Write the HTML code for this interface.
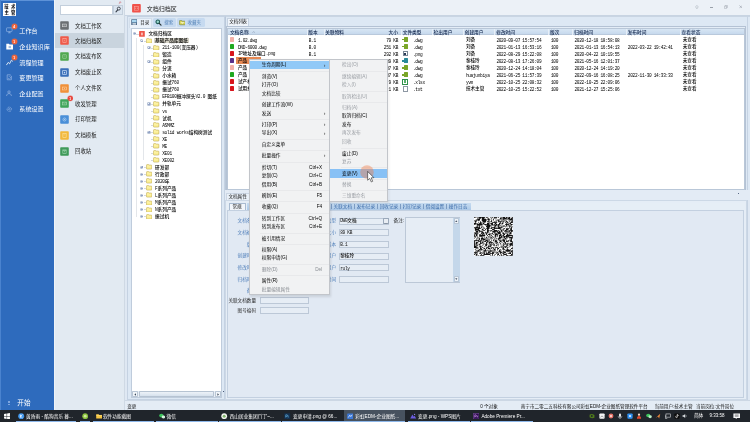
<!DOCTYPE html><html lang="zh-CN"><head><meta charset="utf-8"><title>彩虹EDM-企业图纸管理软件平台</title><style>
html,body{margin:0;padding:0;}
body{width:750px;height:422px;overflow:hidden;background:#dfe8f3;position:relative;font-family:"Liberation Sans","Noto Sans CJK SC",sans-serif;}
div,span.t,span.s,span.b,svg{position:absolute;box-sizing:border-box;}
span.t,span.s,span.b{white-space:nowrap;}
span.s{font-family:"Liberation Sans","Noto Sans CJK SC",sans-serif;font-weight:500;}
span.b{font-family:"Liberation Serif","Noto Serif CJK SC",serif;}
</style></head><body><div id="app" style="left:0;top:0;width:750px;height:422px;will-change:transform;">
<div style="left:0.00px;top:0.00px;width:53.60px;height:410.50px;background:#2e6bbd;"></div>
<div style="left:0.00px;top:0.00px;width:53.60px;height:0.90px;background:#5d92d8;"></div>
<div style="left:0.00px;top:0.00px;width:1.10px;height:410.50px;background:#4a83cf;"></div>
<div style="left:3.20px;top:3.20px;width:12.90px;height:12.70px;background:#fff;"></div>
<span class="t" style="top:4px;font-size:4.3px;line-height:6.02px;color:#16161c;left:4.35px;font-weight:900;">技</span>
<span class="t" style="top:4px;font-size:4.3px;line-height:6.02px;color:#16161c;left:11.05px;font-weight:900;">术</span>
<span class="t" style="top:10px;font-size:4.3px;line-height:6.02px;color:#16161c;left:4.55px;font-weight:900;">主</span>
<span class="t" style="top:10px;font-size:4.3px;line-height:6.02px;color:#16161c;left:11.05px;font-weight:900;">管</span>
<span class="t" style="top:27px;font-size:6.1px;line-height:8.54px;color:#fff;left:19.30px;">工作台</span>
<span class="t" style="top:43px;font-size:6.1px;line-height:8.54px;color:#fff;left:19.30px;">企业知识库</span>
<span class="t" style="top:59px;font-size:6.1px;line-height:8.54px;color:#fff;left:19.30px;">流程管理</span>
<span class="t" style="top:74px;font-size:6.1px;line-height:8.54px;color:#fff;left:19.30px;">变更管理</span>
<span class="t" style="top:90px;font-size:6.1px;line-height:8.54px;color:#fff;left:19.30px;">企业配置</span>
<span class="t" style="top:105px;font-size:6.1px;line-height:8.54px;color:#fff;left:19.30px;">系统设置</span>
<span class="t" style="top:398px;font-size:6.6px;line-height:9.24px;color:#fff;left:17.30px;">开始</span>
<div style="left:7.60px;top:400.60px;width:2.90px;height:0.50px;background:#7ea6df;"></div>
<div style="left:7.60px;top:402.10px;width:2.90px;height:0.50px;background:#7ea6df;"></div>
<div style="left:7.60px;top:403.60px;width:2.90px;height:0.50px;background:#7ea6df;"></div>
<svg style="left:5.8px;top:27.2px;width:6.8px;height:6.8px" viewBox="0 0 68 68"><rect x="5" y="8" width="56" height="38" rx="6" fill="none" stroke="#9dbde9" stroke-width="6"/><path d="M20 58h28M34 46v12" stroke="#9dbde9" stroke-width="6" fill="none"/></svg>
<svg style="left:5.9px;top:43.4px;width:7.6px;height:6.8px" viewBox="0 0 76 68"><path d="M3 8h26l6 8h38v48H3z" fill="#fff"/><path d="M26 34h24M26 46h24" stroke="#2e6bbd" stroke-width="5"/></svg>
<svg style="left:5.8px;top:59.2px;width:7.2px;height:6.8px" viewBox="0 0 72 68"><path d="M6 58L22 34l14 14L54 12l12 10" fill="none" stroke="#fff" stroke-width="8" stroke-linejoin="round" stroke-linecap="round"/></svg>
<svg style="left:5.8px;top:74.4px;width:6.6px;height:6.6px" viewBox="0 0 66 66"><path d="M12 8h30l12 12v38H12z" fill="none" stroke="#a3c0ea" stroke-width="6"/><path d="M22 40a12 12 0 1 0 4-12" fill="none" stroke="#a3c0ea" stroke-width="5"/></svg>
<svg style="left:5.6px;top:90.0px;width:6.8px;height:6.6px" viewBox="0 0 68 66"><circle cx="30" cy="20" r="12" fill="none" stroke="#a3c0ea" stroke-width="6"/><path d="M6 60c0-18 12-24 24-24s24 6 24 24" fill="none" stroke="#a3c0ea" stroke-width="6"/></svg>
<svg style="left:5.8px;top:105.6px;width:6.6px;height:6.6px" viewBox="0 0 66 66"><circle cx="33" cy="33" r="22" fill="none" stroke="#a3c0ea" stroke-width="7" stroke-dasharray="9 5"/><circle cx="33" cy="33" r="8" fill="none" stroke="#a3c0ea" stroke-width="5"/></svg>
<svg style="left:10.6px;top:22.7px;width:7.0px;height:7.0px" viewBox="0 0 70 70"><circle cx="35" cy="35" r="33" fill="#e8703f" opacity="0.35"/><circle cx="35" cy="35" r="27" fill="#f0633a"/></svg>
<span class="t" style="top:25px;font-size:3.3px;line-height:4.62px;color:#fff;left:13.25px;font-weight:bold;">4</span>
<svg style="left:10.6px;top:37.7px;width:7.0px;height:7.0px" viewBox="0 0 70 70"><circle cx="35" cy="35" r="33" fill="#e8703f" opacity="0.35"/><circle cx="35" cy="35" r="27" fill="#f0633a"/></svg>
<span class="t" style="top:40px;font-size:3.3px;line-height:4.62px;color:#fff;left:13.25px;font-weight:bold;">1</span>
<svg style="left:10.6px;top:53.9px;width:7.0px;height:7.0px" viewBox="0 0 70 70"><circle cx="35" cy="35" r="33" fill="#e8703f" opacity="0.35"/><circle cx="35" cy="35" r="27" fill="#f0633a"/></svg>
<span class="t" style="top:56px;font-size:3.3px;line-height:4.62px;color:#fff;left:13.25px;font-weight:bold;">1</span>
<div style="left:53.60px;top:0.00px;width:71.40px;height:410.50px;background:#e2eaf2;"></div>
<div style="left:124.40px;top:0.00px;width:0.80px;height:410.50px;background:#cfd9e4;"></div>
<div style="left:53.60px;top:0.00px;width:1.30px;height:410.50px;background:#eef3f8;"></div>
<div style="left:59.60px;top:5.30px;width:53.60px;height:9.60px;background:#fff;border:0.5px solid #c3cfdc;"></div>
<div style="left:113.20px;top:5.30px;width:9.40px;height:9.60px;background:#dbe5f0;border:0.5px solid #c3cfdc;"></div>
<svg style="left:114.6px;top:6.4px;width:6.6px;height:7.0px" viewBox="0 0 66 70"><circle cx="38" cy="26" r="15" fill="#e8eef6" stroke="#333a44" stroke-width="9"/><path d="M27 38L10 58" stroke="#333a44" stroke-width="11" stroke-linecap="round"/></svg>
<svg style="left:118.0px;top:1.0px;width:3.6px;height:3.6px" viewBox="0 0 36 36"><path d="M22 4l10 10-8 3-6 8-8-8 8-6zM12 24L4 32" stroke="#c98a94" stroke-width="4" fill="#e3a6ae"/></svg>
<div style="left:54.90px;top:32.90px;width:69.50px;height:15.40px;background:#c9d4de;"></div>
<svg style="left:60.2px;top:21.1px;width:9.0px;height:9.0px" viewBox="0 0 88 88"><rect x="2" y="2" width="84" height="84" rx="8" fill="#6b6f73"/><rect x="26" y="30" width="36" height="26" fill="none" stroke="#d8dadc" stroke-width="6"/><path d="M34 40h20" stroke="#d8dadc" stroke-width="5"/></svg>
<span class="t" style="top:23px;font-size:5.4px;line-height:7.56px;color:#222;left:75.00px;">文档工作区</span>
<svg style="left:60.2px;top:36.2px;width:9.0px;height:9.0px" viewBox="0 0 88 88"><rect x="2" y="2" width="84" height="84" rx="8" fill="#ef5a4a"/><rect x="28" y="26" width="32" height="36" fill="none" stroke="#fbb5aa" stroke-width="6"/><path d="M44 36v16" stroke="#fbb5aa" stroke-width="5"/></svg>
<span class="t" style="top:38px;font-size:5.4px;line-height:7.56px;color:#222;left:75.00px;">文档归档区</span>
<svg style="left:60.2px;top:52.0px;width:9.0px;height:9.0px" viewBox="0 0 88 88"><rect x="2" y="2" width="84" height="84" rx="8" fill="#4fa84f"/><rect x="26" y="26" width="36" height="36" rx="4" fill="none" stroke="#a8d6a8" stroke-width="6"/><path d="M36 40h16" stroke="#a8d6a8" stroke-width="5"/></svg>
<span class="t" style="top:53px;font-size:5.4px;line-height:7.56px;color:#222;left:75.00px;">文档发布区</span>
<svg style="left:60.2px;top:67.9px;width:9.0px;height:9.0px" viewBox="0 0 88 88"><rect x="2" y="2" width="84" height="84" rx="8" fill="#3a6fb8"/><rect x="26" y="26" width="36" height="36" fill="none" stroke="#c9dcf6" stroke-width="7"/><rect x="38" y="38" width="12" height="14" fill="#c9dcf6"/></svg>
<span class="t" style="top:69px;font-size:5.4px;line-height:7.56px;color:#222;left:75.00px;">文档废止区</span>
<svg style="left:60.2px;top:83.5px;width:9.0px;height:9.0px" viewBox="0 0 88 88"><rect x="2" y="2" width="84" height="84" rx="8" fill="#f0903a"/><rect x="26" y="30" width="36" height="28" fill="none" stroke="#fbd0a5" stroke-width="6"/><circle cx="44" cy="44" r="5" fill="#fbd0a5"/></svg>
<span class="t" style="top:85px;font-size:5.4px;line-height:7.56px;color:#222;left:75.00px;">个人文件区</span>
<svg style="left:60.2px;top:99.2px;width:9.0px;height:9.0px" viewBox="0 0 88 88"><rect x="2" y="2" width="84" height="84" rx="8" fill="#3fa45a"/><rect x="24" y="30" width="40" height="28" fill="none" stroke="#a9d9b5" stroke-width="6"/><path d="M26 32l18 14 18-14" fill="none" stroke="#a9d9b5" stroke-width="5"/></svg>
<span class="t" style="top:101px;font-size:5.4px;line-height:7.56px;color:#222;left:75.00px;">收发管理</span>
<svg style="left:60.2px;top:114.9px;width:9.0px;height:9.0px" viewBox="0 0 88 88"><rect x="2" y="2" width="84" height="84" rx="8" fill="#4a8fd8"/><circle cx="44" cy="44" r="15" fill="none" stroke="#c3dcf6" stroke-width="6"/><circle cx="44" cy="44" r="5" fill="#c3dcf6"/></svg>
<span class="t" style="top:116px;font-size:5.4px;line-height:7.56px;color:#222;left:75.00px;">打印管理</span>
<svg style="left:60.2px;top:130.5px;width:9.0px;height:9.0px" viewBox="0 0 88 88"><rect x="2" y="2" width="84" height="84" rx="8" fill="#f2b83a"/><rect x="28" y="26" width="32" height="38" fill="none" stroke="#fbe3a5" stroke-width="6"/><path d="M36 38h12" stroke="#fbe3a5" stroke-width="5"/></svg>
<span class="t" style="top:132px;font-size:5.4px;line-height:7.56px;color:#222;left:75.00px;">文档模板</span>
<svg style="left:60.2px;top:146.5px;width:9.0px;height:9.0px" viewBox="0 0 88 88"><rect x="2" y="2" width="84" height="84" rx="8" fill="#3f9a5a"/><rect x="28" y="32" width="32" height="30" fill="none" stroke="#a9d9b8" stroke-width="6"/><path d="M24 28h40" stroke="#a9d9b8" stroke-width="6"/><circle cx="44" cy="47" r="5" fill="#a9d9b8"/></svg>
<span class="t" style="top:148px;font-size:5.4px;line-height:7.56px;color:#222;left:75.00px;">回收站</span>
<svg style="left:66.9px;top:95.1px;width:6.6px;height:6.6px" viewBox="0 0 66 66"><circle cx="33" cy="33" r="31" fill="#e8463c" opacity="0.3"/><circle cx="33" cy="33" r="26" fill="#e8463c"/></svg>
<span class="t" style="top:97px;font-size:3.3px;line-height:4.62px;color:#fff;left:69.35px;font-weight:bold;">1</span>
<div style="left:125.00px;top:0.00px;width:625.00px;height:15.40px;background:#ecf1f7;"></div>
<div style="left:125.00px;top:15.20px;width:625.00px;height:0.60px;background:#c8d4e2;"></div>
<svg style="left:132px;top:4.2px;width:8.9px;height:8.6px" viewBox="0 0 89 86"><rect x="1" y="1" width="87" height="84" rx="8" fill="#f0524a"/><rect x="24" y="24" width="40" height="38" fill="none" stroke="#f9a79f" stroke-width="6"/><path d="M34 38v8M54 38v8" stroke="#fcd0cb" stroke-width="7"/></svg>
<span class="t" style="top:5px;font-size:6.05px;line-height:8.47px;color:#222;left:146.70px;">文档归档区</span>
<div style="left:127.00px;top:16.20px;width:97.60px;height:384.00px;background:#dde8f4;border:0.5px solid #c5d2e2;"></div>
<div style="left:129.20px;top:17.80px;width:22.60px;height:10.20px;background:#ebf2fa;border:0.5px solid #d3deeb;border-bottom:none;"></div>
<div style="left:152.80px;top:18.10px;width:23.20px;height:8.60px;background:#c6daf0;border-radius:1.5px;"></div>
<div style="left:176.50px;top:18.10px;width:28.30px;height:8.60px;background:#c6daf0;border-radius:1.5px;"></div>
<span class="t" style="top:20px;font-size:4.5px;line-height:6.30px;color:#111;left:140.20px;">目录</span>
<span class="t" style="top:20px;font-size:4.5px;line-height:6.30px;color:#4f7fb5;left:164.20px;">搜索</span>
<span class="t" style="top:20px;font-size:4.5px;line-height:6.30px;color:#4f7fb5;left:187.40px;">收藏夹</span>
<svg style="left:130.6px;top:19.4px;width:6.6px;height:6.4px" viewBox="0 0 66 64"><rect x="3" y="3" width="60" height="58" rx="4" fill="#3d5d80"/><rect x="10" y="8" width="46" height="26" fill="#a9d6f0"/><rect x="14" y="42" width="38" height="14" fill="#e6ecf2"/></svg>
<svg style="left:155.0px;top:19.2px;width:7.0px;height:7.0px" viewBox="0 0 70 70"><circle cx="28" cy="28" r="18" fill="#9ad8cf" stroke="#1d5b55" stroke-width="11"/><path d="M42 44L60 62" stroke="#23302f" stroke-width="12" stroke-linecap="round"/></svg>
<svg style="left:178.6px;top:20.4px;width:6.8px;height:5.2px" viewBox="0 0 68 52"><path d="M4 12q0-8 8-8h14l6 8h24q8 0 8 8v20q0 8-8 8H12q-8 0-8-8z" fill="#d6d24e" stroke="#6f7a3a" stroke-width="6"/><path d="M12 22h44l-22 16z" fill="#f9f7d8"/></svg>
<div style="left:131.00px;top:28.00px;width:90.60px;height:369.60px;background:#fff;border:0.5px solid #bfccdc;"></div>
<div style="left:131.50px;top:390.80px;width:89.60px;height:6.40px;background:#e9eff6;"></div>
<div style="left:131.60px;top:390.90px;width:6.80px;height:6.20px;background:#f1f5f9;border:0.5px solid #b9c6d5;border-radius:0.8px;"></div>
<div style="left:214.60px;top:390.90px;width:6.50px;height:6.20px;background:#f1f5f9;border:0.5px solid #b9c6d5;border-radius:0.8px;"></div>
<div style="left:138.60px;top:390.90px;width:75.80px;height:6.20px;background:linear-gradient(#edf2f8,#d6e1ed);border:0.5px solid #b6c3d2;border-radius:0.8px;"></div>
<svg style="left:133.8px;top:392.5px;width:2.4px;height:3.0px" viewBox="0 0 24 30"><path d="M20 2L4 15l16 13z" fill="#3d4a5c"/></svg>
<svg style="left:216.8px;top:392.5px;width:2.4px;height:3.0px" viewBox="0 0 24 30"><path d="M4 2l16 13L4 28z" fill="#3d4a5c"/></svg>
<div style="left:222.90px;top:391.00px;width:0.90px;height:1.20px;background:#4a5a78;"></div>
<div style="left:136.40px;top:33.55px;width:2.60px;height:0.35px;background:#d5d9df;"></div>
<div style="left:133.20px;top:32.10px;width:3.20px;height:3.20px;background:#eef2f8;border:0.5px solid #b9c5d8;border-radius:1px;"></div>
<div style="left:134.00px;top:33.48px;width:1.60px;height:0.45px;background:#94a3c6;"></div>
<svg style="left:139.2px;top:30.700000000000003px;width:5.9px;height:5.9px" viewBox="0 0 59 59"><rect x="1" y="1" width="57" height="57" rx="5" fill="#ee5548"/><rect x="20" y="16" width="19" height="27" fill="#f9b9b2"/></svg>
<span class="s" style="top:31px;font-size:4.7px;line-height:6.58px;color:#000;left:148.40px;">文档归档区</span>
<div style="left:143.50px;top:40.58px;width:2.60px;height:0.35px;background:#d5d9df;"></div>
<div style="left:140.30px;top:39.13px;width:3.20px;height:3.20px;background:#eef2f8;border:0.5px solid #b9c5d8;border-radius:1px;"></div>
<div style="left:141.10px;top:40.51px;width:1.60px;height:0.45px;background:#94a3c6;"></div>
<svg style="left:146.3px;top:37.830000000000005px;width:6.2px;height:5.6px" viewBox="0 0 62 56"><path d="M4 14q0-8 8-8h12q5 0 7 5h21q7 0 7 7v26q0 7-7 7H11q-7 0-7-7z" fill="#fbef94" stroke="#b39a3c" stroke-width="5"/><path d="M7 21h48" stroke="#fffbd6" stroke-width="4"/></svg>
<div style="left:154.40px;top:38.03px;width:34.40px;height:5.30px;background:#d6d3c7;"></div>
<span class="s" style="top:38px;font-size:4.7px;line-height:6.58px;color:#000;left:155.10px;">基础产品库图纸</span>
<div style="left:150.60px;top:47.61px;width:2.60px;height:0.35px;background:#d5d9df;"></div>
<div style="left:147.40px;top:46.16px;width:3.20px;height:3.20px;background:#eef2f8;border:0.5px solid #b9c5d8;border-radius:1px;"></div>
<div style="left:148.20px;top:47.54px;width:1.60px;height:0.45px;background:#94a3c6;"></div>
<div style="left:148.78px;top:46.96px;width:0.45px;height:1.60px;background:#94a3c6;"></div>
<svg style="left:153.4px;top:44.86000000000001px;width:6.2px;height:5.6px" viewBox="0 0 62 56"><path d="M4 14q0-8 8-8h12q5 0 7 5h21q7 0 7 7v26q0 7-7 7H11q-7 0-7-7z" fill="#fbef94" stroke="#b39a3c" stroke-width="5"/><path d="M7 21h48" stroke="#fffbd6" stroke-width="4"/></svg>
<span class="s" style="top:45px;font-size:4.7px;line-height:6.58px;color:#000;left:162.20px;"><span style="font-family:'Liberation Mono',monospace;font-size:4.50px;letter-spacing:-0.29px">211-100(</span>变压器<span style="font-family:'Liberation Mono',monospace;font-size:4.50px;letter-spacing:-0.29px">)</span></span>
<div style="left:150.60px;top:54.64px;width:2.60px;height:0.35px;background:#d5d9df;"></div>
<svg style="left:153.4px;top:51.89000000000001px;width:6.2px;height:5.6px" viewBox="0 0 62 56"><path d="M4 14q0-8 8-8h12q5 0 7 5h21q7 0 7 7v26q0 7-7 7H11q-7 0-7-7z" fill="#fbef94" stroke="#b39a3c" stroke-width="5"/><path d="M7 21h48" stroke="#fffbd6" stroke-width="4"/></svg>
<span class="s" style="top:52px;font-size:4.7px;line-height:6.58px;color:#000;left:162.20px;">锻造</span>
<div style="left:150.60px;top:61.67px;width:2.60px;height:0.35px;background:#d5d9df;"></div>
<div style="left:147.40px;top:60.22px;width:3.20px;height:3.20px;background:#eef2f8;border:0.5px solid #b9c5d8;border-radius:1px;"></div>
<div style="left:148.20px;top:61.60px;width:1.60px;height:0.45px;background:#94a3c6;"></div>
<div style="left:148.78px;top:61.02px;width:0.45px;height:1.60px;background:#94a3c6;"></div>
<svg style="left:153.4px;top:58.92000000000001px;width:6.2px;height:5.6px" viewBox="0 0 62 56"><path d="M4 14q0-8 8-8h12q5 0 7 5h21q7 0 7 7v26q0 7-7 7H11q-7 0-7-7z" fill="#fbef94" stroke="#b39a3c" stroke-width="5"/><path d="M7 21h48" stroke="#fffbd6" stroke-width="4"/></svg>
<span class="s" style="top:59px;font-size:4.7px;line-height:6.58px;color:#000;left:162.20px;">组件</span>
<div style="left:150.60px;top:68.70px;width:2.60px;height:0.35px;background:#d5d9df;"></div>
<svg style="left:153.4px;top:65.94999999999999px;width:6.2px;height:5.6px" viewBox="0 0 62 56"><path d="M4 14q0-8 8-8h12q5 0 7 5h21q7 0 7 7v26q0 7-7 7H11q-7 0-7-7z" fill="#fbef94" stroke="#b39a3c" stroke-width="5"/><path d="M7 21h48" stroke="#fffbd6" stroke-width="4"/></svg>
<span class="s" style="top:66px;font-size:4.7px;line-height:6.58px;color:#000;left:162.20px;">分流</span>
<div style="left:150.60px;top:75.73px;width:2.60px;height:0.35px;background:#d5d9df;"></div>
<svg style="left:153.4px;top:72.97999999999999px;width:6.2px;height:5.6px" viewBox="0 0 62 56"><path d="M4 14q0-8 8-8h12q5 0 7 5h21q7 0 7 7v26q0 7-7 7H11q-7 0-7-7z" fill="#fbef94" stroke="#b39a3c" stroke-width="5"/><path d="M7 21h48" stroke="#fffbd6" stroke-width="4"/></svg>
<span class="s" style="top:73px;font-size:4.7px;line-height:6.58px;color:#000;left:162.20px;">小水箱</span>
<div style="left:150.60px;top:82.76px;width:2.60px;height:0.35px;background:#d5d9df;"></div>
<svg style="left:153.4px;top:80.00999999999999px;width:6.2px;height:5.6px" viewBox="0 0 62 56"><path d="M4 14q0-8 8-8h12q5 0 7 5h21q7 0 7 7v26q0 7-7 7H11q-7 0-7-7z" fill="#fbef94" stroke="#b39a3c" stroke-width="5"/><path d="M7 21h48" stroke="#fffbd6" stroke-width="4"/></svg>
<span class="s" style="top:80px;font-size:4.7px;line-height:6.58px;color:#000;left:162.20px;">振试<span style="font-family:'Liberation Mono',monospace;font-size:4.50px;letter-spacing:-0.29px">760</span></span>
<div style="left:150.60px;top:89.79px;width:2.60px;height:0.35px;background:#d5d9df;"></div>
<svg style="left:153.4px;top:87.03999999999999px;width:6.2px;height:5.6px" viewBox="0 0 62 56"><path d="M4 14q0-8 8-8h12q5 0 7 5h21q7 0 7 7v26q0 7-7 7H11q-7 0-7-7z" fill="#fbef94" stroke="#b39a3c" stroke-width="5"/><path d="M7 21h48" stroke="#fffbd6" stroke-width="4"/></svg>
<span class="s" style="top:87px;font-size:4.7px;line-height:6.58px;color:#000;left:162.20px;">振试<span style="font-family:'Liberation Mono',monospace;font-size:4.50px;letter-spacing:-0.29px">760</span></span>
<div style="left:150.60px;top:96.82px;width:2.60px;height:0.35px;background:#d5d9df;"></div>
<svg style="left:153.4px;top:94.07px;width:6.2px;height:5.6px" viewBox="0 0 62 56"><path d="M4 14q0-8 8-8h12q5 0 7 5h21q7 0 7 7v26q0 7-7 7H11q-7 0-7-7z" fill="#fbef94" stroke="#b39a3c" stroke-width="5"/><path d="M7 21h48" stroke="#fffbd6" stroke-width="4"/></svg>
<span class="s" style="top:94px;font-size:4.7px;line-height:6.58px;color:#000;left:162.20px;"><span style="font-family:'Liberation Mono',monospace;font-size:4.50px;letter-spacing:-0.29px">EFB100</span>振冲探头<span style="font-family:'Liberation Mono',monospace;font-size:4.50px;letter-spacing:-0.29px">V2.0 </span>图纸</span>
<div style="left:150.60px;top:103.85px;width:2.60px;height:0.35px;background:#d5d9df;"></div>
<div style="left:147.40px;top:102.40px;width:3.20px;height:3.20px;background:#eef2f8;border:0.5px solid #b9c5d8;border-radius:1px;"></div>
<div style="left:148.20px;top:103.78px;width:1.60px;height:0.45px;background:#94a3c6;"></div>
<div style="left:148.78px;top:103.20px;width:0.45px;height:1.60px;background:#94a3c6;"></div>
<svg style="left:153.4px;top:101.1px;width:6.2px;height:5.6px" viewBox="0 0 62 56"><path d="M4 14q0-8 8-8h12q5 0 7 5h21q7 0 7 7v26q0 7-7 7H11q-7 0-7-7z" fill="#fbef94" stroke="#b39a3c" stroke-width="5"/><path d="M7 21h48" stroke="#fffbd6" stroke-width="4"/></svg>
<span class="s" style="top:101px;font-size:4.7px;line-height:6.58px;color:#000;left:162.20px;">并轨单元</span>
<div style="left:150.60px;top:110.88px;width:2.60px;height:0.35px;background:#d5d9df;"></div>
<svg style="left:153.4px;top:108.13px;width:6.2px;height:5.6px" viewBox="0 0 62 56"><path d="M4 14q0-8 8-8h12q5 0 7 5h21q7 0 7 7v26q0 7-7 7H11q-7 0-7-7z" fill="#fbef94" stroke="#b39a3c" stroke-width="5"/><path d="M7 21h48" stroke="#fffbd6" stroke-width="4"/></svg>
<span class="s" style="top:109px;font-size:4.7px;line-height:6.58px;color:#000;left:162.20px;"><span style="font-family:'Liberation Mono',monospace;font-size:4.50px;letter-spacing:-0.29px">vs</span></span>
<div style="left:150.60px;top:117.91px;width:2.60px;height:0.35px;background:#d5d9df;"></div>
<svg style="left:153.4px;top:115.16px;width:6.2px;height:5.6px" viewBox="0 0 62 56"><path d="M4 14q0-8 8-8h12q5 0 7 5h21q7 0 7 7v26q0 7-7 7H11q-7 0-7-7z" fill="#fbef94" stroke="#b39a3c" stroke-width="5"/><path d="M7 21h48" stroke="#fffbd6" stroke-width="4"/></svg>
<span class="s" style="top:116px;font-size:4.7px;line-height:6.58px;color:#000;left:162.20px;">试机</span>
<div style="left:150.60px;top:124.94px;width:2.60px;height:0.35px;background:#d5d9df;"></div>
<svg style="left:153.4px;top:122.19px;width:6.2px;height:5.6px" viewBox="0 0 62 56"><path d="M4 14q0-8 8-8h12q5 0 7 5h21q7 0 7 7v26q0 7-7 7H11q-7 0-7-7z" fill="#fbef94" stroke="#b39a3c" stroke-width="5"/><path d="M7 21h48" stroke="#fffbd6" stroke-width="4"/></svg>
<span class="s" style="top:123px;font-size:4.7px;line-height:6.58px;color:#000;left:162.20px;"><span style="font-family:'Liberation Mono',monospace;font-size:4.50px;letter-spacing:-0.29px">ASMMZ</span></span>
<div style="left:150.60px;top:131.97px;width:2.60px;height:0.35px;background:#d5d9df;"></div>
<div style="left:147.40px;top:130.52px;width:3.20px;height:3.20px;background:#eef2f8;border:0.5px solid #b9c5d8;border-radius:1px;"></div>
<div style="left:148.20px;top:131.90px;width:1.60px;height:0.45px;background:#94a3c6;"></div>
<div style="left:148.78px;top:131.32px;width:0.45px;height:1.60px;background:#94a3c6;"></div>
<svg style="left:153.4px;top:129.22px;width:6.2px;height:5.6px" viewBox="0 0 62 56"><path d="M4 14q0-8 8-8h12q5 0 7 5h21q7 0 7 7v26q0 7-7 7H11q-7 0-7-7z" fill="#fbef94" stroke="#b39a3c" stroke-width="5"/><path d="M7 21h48" stroke="#fffbd6" stroke-width="4"/></svg>
<span class="s" style="top:130px;font-size:4.7px;line-height:6.58px;color:#000;left:162.20px;"><span style="font-family:'Liberation Mono',monospace;font-size:4.50px;letter-spacing:-0.29px">solid works</span>结构树测试</span>
<div style="left:150.60px;top:139.00px;width:2.60px;height:0.35px;background:#d5d9df;"></div>
<svg style="left:153.4px;top:136.25px;width:6.2px;height:5.6px" viewBox="0 0 62 56"><path d="M4 14q0-8 8-8h12q5 0 7 5h21q7 0 7 7v26q0 7-7 7H11q-7 0-7-7z" fill="#fbef94" stroke="#b39a3c" stroke-width="5"/><path d="M7 21h48" stroke="#fffbd6" stroke-width="4"/></svg>
<span class="s" style="top:137px;font-size:4.7px;line-height:6.58px;color:#000;left:162.20px;"><span style="font-family:'Liberation Mono',monospace;font-size:4.50px;letter-spacing:-0.29px">XE</span></span>
<div style="left:150.60px;top:146.03px;width:2.60px;height:0.35px;background:#d5d9df;"></div>
<svg style="left:153.4px;top:143.28px;width:6.2px;height:5.6px" viewBox="0 0 62 56"><path d="M4 14q0-8 8-8h12q5 0 7 5h21q7 0 7 7v26q0 7-7 7H11q-7 0-7-7z" fill="#fbef94" stroke="#b39a3c" stroke-width="5"/><path d="M7 21h48" stroke="#fffbd6" stroke-width="4"/></svg>
<span class="s" style="top:144px;font-size:4.7px;line-height:6.58px;color:#000;left:162.20px;"><span style="font-family:'Liberation Mono',monospace;font-size:4.50px;letter-spacing:-0.29px">ME</span></span>
<div style="left:150.60px;top:153.06px;width:2.60px;height:0.35px;background:#d5d9df;"></div>
<svg style="left:153.4px;top:150.31px;width:6.2px;height:5.6px" viewBox="0 0 62 56"><path d="M4 14q0-8 8-8h12q5 0 7 5h21q7 0 7 7v26q0 7-7 7H11q-7 0-7-7z" fill="#fbef94" stroke="#b39a3c" stroke-width="5"/><path d="M7 21h48" stroke="#fffbd6" stroke-width="4"/></svg>
<span class="s" style="top:151px;font-size:4.7px;line-height:6.58px;color:#000;left:162.20px;"><span style="font-family:'Liberation Mono',monospace;font-size:4.50px;letter-spacing:-0.29px">XE01</span></span>
<div style="left:150.60px;top:160.09px;width:2.60px;height:0.35px;background:#d5d9df;"></div>
<svg style="left:153.4px;top:157.34px;width:6.2px;height:5.6px" viewBox="0 0 62 56"><path d="M4 14q0-8 8-8h12q5 0 7 5h21q7 0 7 7v26q0 7-7 7H11q-7 0-7-7z" fill="#fbef94" stroke="#b39a3c" stroke-width="5"/><path d="M7 21h48" stroke="#fffbd6" stroke-width="4"/></svg>
<span class="s" style="top:158px;font-size:4.7px;line-height:6.58px;color:#000;left:162.20px;"><span style="font-family:'Liberation Mono',monospace;font-size:4.50px;letter-spacing:-0.29px">XE002</span></span>
<div style="left:143.50px;top:167.12px;width:2.60px;height:0.35px;background:#d5d9df;"></div>
<div style="left:140.30px;top:165.67px;width:3.20px;height:3.20px;background:#eef2f8;border:0.5px solid #b9c5d8;border-radius:1px;"></div>
<div style="left:141.10px;top:167.05px;width:1.60px;height:0.45px;background:#94a3c6;"></div>
<div style="left:141.68px;top:166.47px;width:0.45px;height:1.60px;background:#94a3c6;"></div>
<svg style="left:146.3px;top:164.36999999999998px;width:6.2px;height:5.6px" viewBox="0 0 62 56"><path d="M4 14q0-8 8-8h12q5 0 7 5h21q7 0 7 7v26q0 7-7 7H11q-7 0-7-7z" fill="#fbef94" stroke="#b39a3c" stroke-width="5"/><path d="M7 21h48" stroke="#fffbd6" stroke-width="4"/></svg>
<span class="s" style="top:165px;font-size:4.7px;line-height:6.58px;color:#000;left:155.10px;">研发部</span>
<div style="left:143.50px;top:174.15px;width:2.60px;height:0.35px;background:#d5d9df;"></div>
<div style="left:140.30px;top:172.70px;width:3.20px;height:3.20px;background:#eef2f8;border:0.5px solid #b9c5d8;border-radius:1px;"></div>
<div style="left:141.10px;top:174.08px;width:1.60px;height:0.45px;background:#94a3c6;"></div>
<div style="left:141.68px;top:173.50px;width:0.45px;height:1.60px;background:#94a3c6;"></div>
<svg style="left:146.3px;top:171.4px;width:6.2px;height:5.6px" viewBox="0 0 62 56"><path d="M4 14q0-8 8-8h12q5 0 7 5h21q7 0 7 7v26q0 7-7 7H11q-7 0-7-7z" fill="#fbef94" stroke="#b39a3c" stroke-width="5"/><path d="M7 21h48" stroke="#fffbd6" stroke-width="4"/></svg>
<span class="s" style="top:172px;font-size:4.7px;line-height:6.58px;color:#000;left:155.10px;">行政部</span>
<div style="left:143.50px;top:181.18px;width:2.60px;height:0.35px;background:#d5d9df;"></div>
<div style="left:140.30px;top:179.73px;width:3.20px;height:3.20px;background:#eef2f8;border:0.5px solid #b9c5d8;border-radius:1px;"></div>
<div style="left:141.10px;top:181.11px;width:1.60px;height:0.45px;background:#94a3c6;"></div>
<div style="left:141.68px;top:180.53px;width:0.45px;height:1.60px;background:#94a3c6;"></div>
<svg style="left:146.3px;top:178.42999999999998px;width:6.2px;height:5.6px" viewBox="0 0 62 56"><path d="M4 14q0-8 8-8h12q5 0 7 5h21q7 0 7 7v26q0 7-7 7H11q-7 0-7-7z" fill="#fbef94" stroke="#b39a3c" stroke-width="5"/><path d="M7 21h48" stroke="#fffbd6" stroke-width="4"/></svg>
<span class="s" style="top:179px;font-size:4.7px;line-height:6.58px;color:#000;left:155.10px;"><span style="font-family:'Liberation Mono',monospace;font-size:4.50px;letter-spacing:-0.29px">2020</span>年</span>
<div style="left:143.50px;top:188.21px;width:2.60px;height:0.35px;background:#d5d9df;"></div>
<div style="left:140.30px;top:186.76px;width:3.20px;height:3.20px;background:#eef2f8;border:0.5px solid #b9c5d8;border-radius:1px;"></div>
<div style="left:141.10px;top:188.14px;width:1.60px;height:0.45px;background:#94a3c6;"></div>
<div style="left:141.68px;top:187.56px;width:0.45px;height:1.60px;background:#94a3c6;"></div>
<svg style="left:146.3px;top:185.46px;width:6.2px;height:5.6px" viewBox="0 0 62 56"><path d="M4 14q0-8 8-8h12q5 0 7 5h21q7 0 7 7v26q0 7-7 7H11q-7 0-7-7z" fill="#fbef94" stroke="#b39a3c" stroke-width="5"/><path d="M7 21h48" stroke="#fffbd6" stroke-width="4"/></svg>
<span class="s" style="top:186px;font-size:4.7px;line-height:6.58px;color:#000;left:155.10px;"><span style="font-family:'Liberation Mono',monospace;font-size:4.50px;letter-spacing:-0.29px">F</span>系列产品</span>
<div style="left:143.50px;top:195.24px;width:2.60px;height:0.35px;background:#d5d9df;"></div>
<div style="left:140.30px;top:193.79px;width:3.20px;height:3.20px;background:#eef2f8;border:0.5px solid #b9c5d8;border-radius:1px;"></div>
<div style="left:141.10px;top:195.17px;width:1.60px;height:0.45px;background:#94a3c6;"></div>
<div style="left:141.68px;top:194.59px;width:0.45px;height:1.60px;background:#94a3c6;"></div>
<svg style="left:146.3px;top:192.48999999999998px;width:6.2px;height:5.6px" viewBox="0 0 62 56"><path d="M4 14q0-8 8-8h12q5 0 7 5h21q7 0 7 7v26q0 7-7 7H11q-7 0-7-7z" fill="#fbef94" stroke="#b39a3c" stroke-width="5"/><path d="M7 21h48" stroke="#fffbd6" stroke-width="4"/></svg>
<span class="s" style="top:193px;font-size:4.7px;line-height:6.58px;color:#000;left:155.10px;"><span style="font-family:'Liberation Mono',monospace;font-size:4.50px;letter-spacing:-0.29px">L</span>系列产品</span>
<div style="left:143.50px;top:202.27px;width:2.60px;height:0.35px;background:#d5d9df;"></div>
<div style="left:140.30px;top:200.82px;width:3.20px;height:3.20px;background:#eef2f8;border:0.5px solid #b9c5d8;border-radius:1px;"></div>
<div style="left:141.10px;top:202.20px;width:1.60px;height:0.45px;background:#94a3c6;"></div>
<div style="left:141.68px;top:201.62px;width:0.45px;height:1.60px;background:#94a3c6;"></div>
<svg style="left:146.3px;top:199.52px;width:6.2px;height:5.6px" viewBox="0 0 62 56"><path d="M4 14q0-8 8-8h12q5 0 7 5h21q7 0 7 7v26q0 7-7 7H11q-7 0-7-7z" fill="#fbef94" stroke="#b39a3c" stroke-width="5"/><path d="M7 21h48" stroke="#fffbd6" stroke-width="4"/></svg>
<span class="s" style="top:200px;font-size:4.7px;line-height:6.58px;color:#000;left:155.10px;"><span style="font-family:'Liberation Mono',monospace;font-size:4.50px;letter-spacing:-0.29px">M</span>系列产品</span>
<div style="left:143.50px;top:209.30px;width:2.60px;height:0.35px;background:#d5d9df;"></div>
<div style="left:140.30px;top:207.85px;width:3.20px;height:3.20px;background:#eef2f8;border:0.5px solid #b9c5d8;border-radius:1px;"></div>
<div style="left:141.10px;top:209.23px;width:1.60px;height:0.45px;background:#94a3c6;"></div>
<div style="left:141.68px;top:208.65px;width:0.45px;height:1.60px;background:#94a3c6;"></div>
<svg style="left:146.3px;top:206.54999999999998px;width:6.2px;height:5.6px" viewBox="0 0 62 56"><path d="M4 14q0-8 8-8h12q5 0 7 5h21q7 0 7 7v26q0 7-7 7H11q-7 0-7-7z" fill="#fbef94" stroke="#b39a3c" stroke-width="5"/><path d="M7 21h48" stroke="#fffbd6" stroke-width="4"/></svg>
<span class="s" style="top:207px;font-size:4.7px;line-height:6.58px;color:#000;left:155.10px;"><span style="font-family:'Liberation Mono',monospace;font-size:4.50px;letter-spacing:-0.29px">N</span>系列产品</span>
<div style="left:143.50px;top:216.33px;width:2.60px;height:0.35px;background:#d5d9df;"></div>
<div style="left:140.30px;top:214.88px;width:3.20px;height:3.20px;background:#eef2f8;border:0.5px solid #b9c5d8;border-radius:1px;"></div>
<div style="left:141.10px;top:216.26px;width:1.60px;height:0.45px;background:#94a3c6;"></div>
<div style="left:141.68px;top:215.68px;width:0.45px;height:1.60px;background:#94a3c6;"></div>
<svg style="left:146.3px;top:213.58px;width:6.2px;height:5.6px" viewBox="0 0 62 56"><path d="M4 14q0-8 8-8h12q5 0 7 5h21q7 0 7 7v26q0 7-7 7H11q-7 0-7-7z" fill="#fbef94" stroke="#b39a3c" stroke-width="5"/><path d="M7 21h48" stroke="#fffbd6" stroke-width="4"/></svg>
<span class="s" style="top:214px;font-size:4.7px;line-height:6.58px;color:#000;left:155.10px;">振试机</span>
<div style="left:136.10px;top:37.50px;width:0.35px;height:179.00px;background:#e3e6ea;"></div>
<div style="left:143.40px;top:44.50px;width:0.35px;height:115.00px;background:#e3e6ea;"></div>
<div style="left:224.80px;top:16.20px;width:525.20px;height:177.30px;background:#dde8f4;border-left:0.6px solid #b9c8da;border-top:0.5px solid #c9d5e3;"></div>
<div style="left:227.20px;top:18.00px;width:22.30px;height:8.00px;background:#eff4fa;border:0.5px solid #c6d2e1;border-bottom:none;"></div>
<span class="t" style="top:19px;font-size:4.45px;line-height:6.23px;color:#111;left:229.30px;">文档列表</span>
<div style="left:225.90px;top:25.80px;width:520.40px;height:164.60px;background:#e4edf7;border:0.5px solid #b4c2d4;"></div>
<div style="left:227.20px;top:28.40px;width:517.40px;height:161.20px;background:#fff;border:0.5px solid #b9c7d8;"></div>
<div style="left:227.60px;top:28.80px;width:516.60px;height:6.60px;background:linear-gradient(#d8e6f4,#c6d9ed);border-bottom:0.5px solid #b9c9dc;"></div>
<span class="s" style="top:30px;font-size:4.7px;line-height:6.58px;color:#14284e;left:229.90px;">文档名称</span>
<span class="s" style="top:30px;font-size:4.7px;line-height:6.58px;color:#14284e;left:308.20px;">版本</span>
<span class="s" style="top:30px;font-size:4.7px;line-height:6.58px;color:#14284e;left:325.30px;">关联物料</span>
<span class="s" style="top:30px;font-size:4.7px;line-height:6.58px;color:#14284e;left:402.70px;">文件类型</span>
<span class="s" style="top:30px;font-size:4.7px;line-height:6.58px;color:#14284e;left:433.60px;">检出用户</span>
<span class="s" style="top:30px;font-size:4.7px;line-height:6.58px;color:#14284e;left:464.70px;">创建用户</span>
<span class="s" style="top:30px;font-size:4.7px;line-height:6.58px;color:#14284e;left:496.20px;">修改时间</span>
<span class="s" style="top:30px;font-size:4.7px;line-height:6.58px;color:#14284e;left:550.00px;">版次</span>
<span class="s" style="top:30px;font-size:4.7px;line-height:6.58px;color:#14284e;left:574.30px;">归档时间</span>
<span class="s" style="top:30px;font-size:4.7px;line-height:6.58px;color:#14284e;left:627.60px;">发布时间</span>
<span class="s" style="top:30px;font-size:4.7px;line-height:6.58px;color:#14284e;left:681.60px;">查看状态</span>
<span class="s" style="top:30px;font-size:4.7px;line-height:6.58px;color:#14284e;right:352.00px;">大小</span>
<svg style="left:251.8px;top:31.0px;width:3.4px;height:2.4px" viewBox="0 0 34 24"><path d="M3 21L17 4l14 17" fill="none" stroke="#7b8da6" stroke-width="4"/></svg>
<div style="left:306.50px;top:29.40px;width:0.40px;height:5.60px;background:#e6eef7;"></div>
<div style="left:323.50px;top:29.40px;width:0.40px;height:5.60px;background:#e6eef7;"></div>
<div style="left:400.50px;top:29.40px;width:0.40px;height:5.60px;background:#e6eef7;"></div>
<div style="left:431.50px;top:29.40px;width:0.40px;height:5.60px;background:#e6eef7;"></div>
<div style="left:462.50px;top:29.40px;width:0.40px;height:5.60px;background:#e6eef7;"></div>
<div style="left:494.00px;top:29.40px;width:0.40px;height:5.60px;background:#e6eef7;"></div>
<div style="left:548.00px;top:29.40px;width:0.40px;height:5.60px;background:#e6eef7;"></div>
<div style="left:572.00px;top:29.40px;width:0.40px;height:5.60px;background:#e6eef7;"></div>
<div style="left:625.50px;top:29.40px;width:0.40px;height:5.60px;background:#e6eef7;"></div>
<div style="left:679.50px;top:29.40px;width:0.40px;height:5.60px;background:#e6eef7;"></div>
<div style="left:229.60px;top:36.80px;width:4.40px;height:5.40px;background:#f3b0a8;border-radius:0.4px;"></div>
<span class="s" style="top:38px;font-size:4.6px;line-height:6.44px;color:#000;left:238.00px;"><span style="font-family:'Liberation Mono',monospace;font-size:4.50px;letter-spacing:-0.34px">1.02.dwg</span></span>
<span class="s" style="top:38px;font-size:4.6px;line-height:6.44px;color:#000;left:308.80px;"><span style="font-family:'Liberation Mono',monospace;font-size:4.50px;letter-spacing:-0.34px">B.1</span></span>
<span class="s" style="top:38px;font-size:4.6px;line-height:6.44px;color:#000;right:352.00px;"><span style="font-family:'Liberation Mono',monospace;font-size:4.50px;letter-spacing:-0.34px">79 KB</span></span>
<div style="left:403.60px;top:36.90px;width:4.40px;height:5.20px;background:#7aa628;border-radius:0.5px;"></div>
<div style="left:401.60px;top:38.60px;width:2.60px;height:1.80px;background:#7aa628;"></div>
<span class="s" style="top:38px;font-size:4.6px;line-height:6.44px;color:#000;left:413.00px;"><span style="font-family:'Liberation Mono',monospace;font-size:4.50px;letter-spacing:-0.34px">.dwg</span></span>
<span class="s" style="top:37px;font-size:4.6px;line-height:6.44px;color:#000;left:465.90px;">刘备</span>
<span class="s" style="top:38px;font-size:4.6px;line-height:6.44px;color:#000;left:496.40px;"><span style="font-family:'Liberation Mono',monospace;font-size:4.50px;letter-spacing:-0.34px">2020-09-07 15:57:54</span></span>
<span class="s" style="top:38px;font-size:4.6px;line-height:6.44px;color:#000;left:551.00px;"><span style="font-family:'Liberation Mono',monospace;font-size:4.50px;letter-spacing:-0.34px">100</span></span>
<span class="s" style="top:38px;font-size:4.6px;line-height:6.44px;color:#000;left:574.50px;"><span style="font-family:'Liberation Mono',monospace;font-size:4.50px;letter-spacing:-0.34px">2020-12-18 18:58:08</span></span>
<span class="s" style="top:37px;font-size:4.6px;line-height:6.44px;color:#000;left:682.70px;">未查看</span>
<div style="left:229.60px;top:43.84px;width:4.40px;height:5.40px;background:#1fa81f;border-radius:0.4px;"></div>
<span class="s" style="top:45px;font-size:4.6px;line-height:6.44px;color:#000;left:238.00px;"><span style="font-family:'Liberation Mono',monospace;font-size:4.50px;letter-spacing:-0.34px">DND-6000.dwg</span></span>
<span class="s" style="top:45px;font-size:4.6px;line-height:6.44px;color:#000;left:308.80px;"><span style="font-family:'Liberation Mono',monospace;font-size:4.50px;letter-spacing:-0.34px">B.0</span></span>
<span class="s" style="top:45px;font-size:4.6px;line-height:6.44px;color:#000;right:352.00px;"><span style="font-family:'Liberation Mono',monospace;font-size:4.50px;letter-spacing:-0.34px">251 KB</span></span>
<div style="left:403.60px;top:43.94px;width:4.40px;height:5.20px;background:#7aa628;border-radius:0.5px;"></div>
<div style="left:401.60px;top:45.64px;width:2.60px;height:1.80px;background:#7aa628;"></div>
<span class="s" style="top:45px;font-size:4.6px;line-height:6.44px;color:#000;left:413.00px;"><span style="font-family:'Liberation Mono',monospace;font-size:4.50px;letter-spacing:-0.34px">.dwg</span></span>
<span class="s" style="top:44px;font-size:4.6px;line-height:6.44px;color:#000;left:465.90px;">刘备</span>
<span class="s" style="top:45px;font-size:4.6px;line-height:6.44px;color:#000;left:496.40px;"><span style="font-family:'Liberation Mono',monospace;font-size:4.50px;letter-spacing:-0.34px">2021-01-13 16:53:16</span></span>
<span class="s" style="top:45px;font-size:4.6px;line-height:6.44px;color:#000;left:551.00px;"><span style="font-family:'Liberation Mono',monospace;font-size:4.50px;letter-spacing:-0.34px">100</span></span>
<span class="s" style="top:45px;font-size:4.6px;line-height:6.44px;color:#000;left:574.50px;"><span style="font-family:'Liberation Mono',monospace;font-size:4.50px;letter-spacing:-0.34px">2021-01-13 16:54:13</span></span>
<span class="s" style="top:45px;font-size:4.6px;line-height:6.44px;color:#000;left:627.80px;"><span style="font-family:'Liberation Mono',monospace;font-size:4.50px;letter-spacing:-0.34px">2022-03-22 19:42:41</span></span>
<span class="s" style="top:44px;font-size:4.6px;line-height:6.44px;color:#000;left:682.70px;">未查看</span>
<div style="left:229.60px;top:50.88px;width:4.40px;height:5.40px;background:#d8141c;border-radius:0.4px;"></div>
<span class="s" style="top:51px;font-size:4.6px;line-height:6.44px;color:#000;left:238.00px;"><span style="font-family:'Liberation Mono',monospace;font-size:4.50px;letter-spacing:-0.34px">IP</span>地址及端口<span style="font-family:'Liberation Mono',monospace;font-size:4.50px;letter-spacing:-0.34px">.png</span></span>
<span class="s" style="top:52px;font-size:4.6px;line-height:6.44px;color:#000;left:308.80px;"><span style="font-family:'Liberation Mono',monospace;font-size:4.50px;letter-spacing:-0.34px">B.1</span></span>
<span class="s" style="top:52px;font-size:4.6px;line-height:6.44px;color:#000;right:352.00px;"><span style="font-family:'Liberation Mono',monospace;font-size:4.50px;letter-spacing:-0.34px">292 KB</span></span>
<div style="left:402.60px;top:50.68px;width:5.20px;height:5.80px;background:#fff;border:0.5px solid #7a8896;"></div>
<div style="left:403.80px;top:52.98px;width:2.60px;height:2.20px;background:#2a3a55;"></div>
<span class="s" style="top:52px;font-size:4.6px;line-height:6.44px;color:#000;left:413.00px;"><span style="font-family:'Liberation Mono',monospace;font-size:4.50px;letter-spacing:-0.34px">.png</span></span>
<span class="s" style="top:51px;font-size:4.6px;line-height:6.44px;color:#000;left:465.90px;">刘备</span>
<span class="s" style="top:52px;font-size:4.6px;line-height:6.44px;color:#000;left:496.40px;"><span style="font-family:'Liberation Mono',monospace;font-size:4.50px;letter-spacing:-0.34px">2022-08-29 15:22:08</span></span>
<span class="s" style="top:52px;font-size:4.6px;line-height:6.44px;color:#000;left:551.00px;"><span style="font-family:'Liberation Mono',monospace;font-size:4.50px;letter-spacing:-0.34px">100</span></span>
<span class="s" style="top:52px;font-size:4.6px;line-height:6.44px;color:#000;left:574.50px;"><span style="font-family:'Liberation Mono',monospace;font-size:4.50px;letter-spacing:-0.34px">2020-04-22 10:19:55</span></span>
<span class="s" style="top:51px;font-size:4.6px;line-height:6.44px;color:#000;left:682.70px;">未查看</span>
<div style="left:229.60px;top:57.92px;width:4.40px;height:5.40px;background:#5a2f8a;border-radius:0.4px;"></div>
<div style="left:236.40px;top:57.12px;width:24.20px;height:6.60px;background:#e88a54;"></div>
<span class="s" style="top:58px;font-size:4.6px;line-height:6.44px;color:#000;left:238.00px;">产品</span>
<span class="s" style="top:59px;font-size:4.6px;line-height:6.44px;color:#000;left:308.80px;"><span style="font-family:'Liberation Mono',monospace;font-size:4.50px;letter-spacing:-0.34px">B.1</span></span>
<span class="s" style="top:59px;font-size:4.6px;line-height:6.44px;color:#000;right:352.00px;"><span style="font-family:'Liberation Mono',monospace;font-size:4.50px;letter-spacing:-0.34px">89 KB</span></span>
<div style="left:403.60px;top:58.02px;width:4.40px;height:5.20px;background:#2a8a9a;border-radius:0.5px;"></div>
<div style="left:401.60px;top:59.72px;width:2.60px;height:1.80px;background:#2a8a9a;"></div>
<span class="s" style="top:59px;font-size:4.6px;line-height:6.44px;color:#000;left:413.00px;"><span style="font-family:'Liberation Mono',monospace;font-size:4.50px;letter-spacing:-0.34px">.dwg</span></span>
<span class="s" style="top:58px;font-size:4.6px;line-height:6.44px;color:#000;left:465.90px;">黎桂玲</span>
<span class="s" style="top:59px;font-size:4.6px;line-height:6.44px;color:#000;left:496.40px;"><span style="font-family:'Liberation Mono',monospace;font-size:4.50px;letter-spacing:-0.34px">2022-08-13 17:26:09</span></span>
<span class="s" style="top:59px;font-size:4.6px;line-height:6.44px;color:#000;left:551.00px;"><span style="font-family:'Liberation Mono',monospace;font-size:4.50px;letter-spacing:-0.34px">100</span></span>
<span class="s" style="top:59px;font-size:4.6px;line-height:6.44px;color:#000;left:574.50px;"><span style="font-family:'Liberation Mono',monospace;font-size:4.50px;letter-spacing:-0.34px">2021-05-16 12:01:37</span></span>
<span class="s" style="top:58px;font-size:4.6px;line-height:6.44px;color:#000;left:682.70px;">未查看</span>
<div style="left:229.60px;top:64.96px;width:4.40px;height:5.40px;background:#f3b0a8;border-radius:0.4px;"></div>
<span class="s" style="top:65px;font-size:4.6px;line-height:6.44px;color:#000;left:238.00px;">产品</span>
<span class="s" style="top:66px;font-size:4.6px;line-height:6.44px;color:#000;left:308.80px;"><span style="font-family:'Liberation Mono',monospace;font-size:4.50px;letter-spacing:-0.34px">B.1</span></span>
<span class="s" style="top:66px;font-size:4.6px;line-height:6.44px;color:#000;right:352.00px;"><span style="font-family:'Liberation Mono',monospace;font-size:4.50px;letter-spacing:-0.34px">87 KB</span></span>
<div style="left:403.60px;top:65.06px;width:4.40px;height:5.20px;background:#7aa628;border-radius:0.5px;"></div>
<div style="left:401.60px;top:66.76px;width:2.60px;height:1.80px;background:#7aa628;"></div>
<span class="s" style="top:66px;font-size:4.6px;line-height:6.44px;color:#000;left:413.00px;"><span style="font-family:'Liberation Mono',monospace;font-size:4.50px;letter-spacing:-0.34px">.dwg</span></span>
<span class="s" style="top:65px;font-size:4.6px;line-height:6.44px;color:#000;left:465.90px;">黎桂玲</span>
<span class="s" style="top:66px;font-size:4.6px;line-height:6.44px;color:#000;left:496.40px;"><span style="font-family:'Liberation Mono',monospace;font-size:4.50px;letter-spacing:-0.34px">2020-12-24 14:18:04</span></span>
<span class="s" style="top:66px;font-size:4.6px;line-height:6.44px;color:#000;left:551.00px;"><span style="font-family:'Liberation Mono',monospace;font-size:4.50px;letter-spacing:-0.34px">100</span></span>
<span class="s" style="top:66px;font-size:4.6px;line-height:6.44px;color:#000;left:574.50px;"><span style="font-family:'Liberation Mono',monospace;font-size:4.50px;letter-spacing:-0.34px">2020-12-24 14:19:20</span></span>
<span class="s" style="top:65px;font-size:4.6px;line-height:6.44px;color:#000;left:682.70px;">未查看</span>
<div style="left:229.60px;top:72.00px;width:4.40px;height:5.40px;background:#1fa81f;border-radius:0.4px;"></div>
<span class="s" style="top:72px;font-size:4.6px;line-height:6.44px;color:#000;left:238.00px;">产品</span>
<span class="s" style="top:73px;font-size:4.6px;line-height:6.44px;color:#000;left:308.80px;"><span style="font-family:'Liberation Mono',monospace;font-size:4.50px;letter-spacing:-0.34px">B.1</span></span>
<span class="s" style="top:73px;font-size:4.6px;line-height:6.44px;color:#000;right:352.00px;"><span style="font-family:'Liberation Mono',monospace;font-size:4.50px;letter-spacing:-0.34px">87 KB</span></span>
<div style="left:403.60px;top:72.10px;width:4.40px;height:5.20px;background:#7aa628;border-radius:0.5px;"></div>
<div style="left:401.60px;top:73.80px;width:2.60px;height:1.80px;background:#7aa628;"></div>
<span class="s" style="top:73px;font-size:4.6px;line-height:6.44px;color:#000;left:413.00px;"><span style="font-family:'Liberation Mono',monospace;font-size:4.50px;letter-spacing:-0.34px">.dwg</span></span>
<span class="s" style="top:73px;font-size:4.6px;line-height:6.44px;color:#000;left:465.90px;"><span style="font-family:'Liberation Mono',monospace;font-size:4.50px;letter-spacing:-0.34px">huajunbiya</span></span>
<span class="s" style="top:73px;font-size:4.6px;line-height:6.44px;color:#000;left:496.40px;"><span style="font-family:'Liberation Mono',monospace;font-size:4.50px;letter-spacing:-0.34px">2021-06-25 11:57:39</span></span>
<span class="s" style="top:73px;font-size:4.6px;line-height:6.44px;color:#000;left:551.00px;"><span style="font-family:'Liberation Mono',monospace;font-size:4.50px;letter-spacing:-0.34px">100</span></span>
<span class="s" style="top:73px;font-size:4.6px;line-height:6.44px;color:#000;left:574.50px;"><span style="font-family:'Liberation Mono',monospace;font-size:4.50px;letter-spacing:-0.34px">2022-09-16 16:08:25</span></span>
<span class="s" style="top:73px;font-size:4.6px;line-height:6.44px;color:#000;left:627.80px;"><span style="font-family:'Liberation Mono',monospace;font-size:4.50px;letter-spacing:-0.34px">2022-11-30 14:33:33</span></span>
<span class="s" style="top:72px;font-size:4.6px;line-height:6.44px;color:#000;left:682.70px;">未查看</span>
<div style="left:229.60px;top:79.04px;width:4.40px;height:5.40px;background:#d8141c;border-radius:0.4px;"></div>
<span class="s" style="top:79px;font-size:4.6px;line-height:6.44px;color:#000;left:238.00px;">试产样</span>
<span class="s" style="top:80px;font-size:4.6px;line-height:6.44px;color:#000;left:308.80px;"><span style="font-family:'Liberation Mono',monospace;font-size:4.50px;letter-spacing:-0.34px">A.0</span></span>
<span class="s" style="top:80px;font-size:4.6px;line-height:6.44px;color:#000;right:352.00px;"><span style="font-family:'Liberation Mono',monospace;font-size:4.50px;letter-spacing:-0.34px">9 KB</span></span>
<div style="left:402.40px;top:78.84px;width:5.20px;height:5.80px;background:#fff;border:0.6px solid #2f8f4a;"></div>
<div style="left:403.80px;top:80.34px;width:2.20px;height:2.80px;background:#57b06a;"></div>
<span class="s" style="top:80px;font-size:4.6px;line-height:6.44px;color:#000;left:413.00px;"><span style="font-family:'Liberation Mono',monospace;font-size:4.50px;letter-spacing:-0.34px">.xlsx</span></span>
<span class="s" style="top:80px;font-size:4.6px;line-height:6.44px;color:#000;left:465.90px;"><span style="font-family:'Liberation Mono',monospace;font-size:4.50px;letter-spacing:-0.34px">yvm</span></span>
<span class="s" style="top:80px;font-size:4.6px;line-height:6.44px;color:#000;left:496.40px;"><span style="font-family:'Liberation Mono',monospace;font-size:4.50px;letter-spacing:-0.34px">2022-10-25 22:08:32</span></span>
<span class="s" style="top:80px;font-size:4.6px;line-height:6.44px;color:#000;left:551.00px;"><span style="font-family:'Liberation Mono',monospace;font-size:4.50px;letter-spacing:-0.34px">100</span></span>
<span class="s" style="top:80px;font-size:4.6px;line-height:6.44px;color:#000;left:574.50px;"><span style="font-family:'Liberation Mono',monospace;font-size:4.50px;letter-spacing:-0.34px">2022-10-25 22:09:06</span></span>
<span class="s" style="top:79px;font-size:4.6px;line-height:6.44px;color:#000;left:682.70px;">未查看</span>
<div style="left:229.60px;top:86.08px;width:4.40px;height:5.40px;background:#d8141c;border-radius:0.4px;"></div>
<span class="s" style="top:86px;font-size:4.6px;line-height:6.44px;color:#000;left:238.00px;">试用报</span>
<span class="s" style="top:87px;font-size:4.6px;line-height:6.44px;color:#000;left:308.80px;"><span style="font-family:'Liberation Mono',monospace;font-size:4.50px;letter-spacing:-0.34px">A.0</span></span>
<span class="s" style="top:87px;font-size:4.6px;line-height:6.44px;color:#000;right:352.00px;"><span style="font-family:'Liberation Mono',monospace;font-size:4.50px;letter-spacing:-0.34px">1 KB</span></span>
<div style="left:402.60px;top:85.88px;width:5.00px;height:5.80px;background:#fff;border:0.5px solid #8e98a4;"></div>
<span class="s" style="top:87px;font-size:4.6px;line-height:6.44px;color:#000;left:413.00px;"><span style="font-family:'Liberation Mono',monospace;font-size:4.50px;letter-spacing:-0.34px">.txt</span></span>
<span class="s" style="top:86px;font-size:4.6px;line-height:6.44px;color:#000;left:465.90px;">技术主管</span>
<span class="s" style="top:87px;font-size:4.6px;line-height:6.44px;color:#000;left:496.40px;"><span style="font-family:'Liberation Mono',monospace;font-size:4.50px;letter-spacing:-0.34px">2022-10-25 15:22:52</span></span>
<span class="s" style="top:87px;font-size:4.6px;line-height:6.44px;color:#000;left:551.00px;"><span style="font-family:'Liberation Mono',monospace;font-size:4.50px;letter-spacing:-0.34px">100</span></span>
<span class="s" style="top:87px;font-size:4.6px;line-height:6.44px;color:#000;left:574.50px;"><span style="font-family:'Liberation Mono',monospace;font-size:4.50px;letter-spacing:-0.34px">2021-12-27 15:25:06</span></span>
<span class="s" style="top:86px;font-size:4.6px;line-height:6.44px;color:#000;left:682.70px;">未查看</span>
<div style="left:747.30px;top:16.20px;width:0.90px;height:384.00px;background:#c6d3e3;"></div>
<svg style="left:695.4px;top:5.2px;width:3.8px;height:4.2px" viewBox="0 0 38 42"><path d="M19 4l13 15-13 19L6 19z" fill="none" stroke="#8c949e" stroke-width="4"/></svg>
<div style="left:709.80px;top:7.00px;width:3.60px;height:0.55px;background:#9aa1aa;"></div>
<svg style="left:724.2px;top:5.2px;width:3.8px;height:3.8px" viewBox="0 0 38 38"><path d="M4 12h22v22H4zM12 12V4h22v22h-8" fill="none" stroke="#8a929c" stroke-width="4"/></svg>
<svg style="left:738.8px;top:5.3px;width:3.6px;height:3.6px" viewBox="0 0 36 36"><path d="M4 4l28 28M32 4L4 32" stroke="#7f8791" stroke-width="4.5"/></svg>
<div style="left:224.80px;top:190.40px;width:525.20px;height:10.00px;background:#e3ebf5;"></div>
<div style="left:224.80px;top:200.20px;width:522.60px;height:199.80px;background:#e5edf6;border:0.5px solid #ccd8e6;"></div>
<div style="left:738.20px;top:192.60px;width:1.00px;height:1.00px;background:#5a6a86;"></div>
<div style="left:226.20px;top:192.80px;width:23.60px;height:7.40px;background:#e9f0f8;border:0.5px solid #cbd6e4;border-bottom:none;"></div>
<span class="t" style="top:194px;font-size:4.6px;line-height:6.44px;color:#111;left:228.40px;">文档属性</span>
<div style="left:226.60px;top:202.60px;width:518.00px;height:7.40px;background:#e6eef6;"></div>
<div style="left:246.60px;top:202.50px;width:224.40px;height:7.70px;background:linear-gradient(#c6dbf0,#adcae8);"></div>
<div style="left:229.40px;top:202.90px;width:16.40px;height:7.40px;background:#f2f6fb;border:0.5px solid #a9bbd1;border-bottom:none;"></div>
<span class="t" style="top:204px;font-size:4.6px;line-height:6.44px;color:#111;left:232.50px;">常规</span>
<span class="t" style="top:204px;font-size:4.6px;line-height:6.44px;color:#3868a6;left:333.60px;">关联文档</span>
<div style="left:354.20px;top:203.80px;width:0.45px;height:5.20px;background:#7d9cc2;"></div>
<span class="t" style="top:204px;font-size:4.6px;line-height:6.44px;color:#3868a6;left:356.65px;">发布记录</span>
<div style="left:377.25px;top:203.80px;width:0.45px;height:5.20px;background:#7d9cc2;"></div>
<span class="t" style="top:204px;font-size:4.6px;line-height:6.44px;color:#3868a6;left:379.70px;">回收记录</span>
<div style="left:400.30px;top:203.80px;width:0.45px;height:5.20px;background:#7d9cc2;"></div>
<span class="t" style="top:204px;font-size:4.6px;line-height:6.44px;color:#3868a6;left:402.75px;">打印记录</span>
<div style="left:423.35px;top:203.80px;width:0.45px;height:5.20px;background:#7d9cc2;"></div>
<span class="t" style="top:204px;font-size:4.6px;line-height:6.44px;color:#3868a6;left:425.80px;">借阅设置</span>
<div style="left:446.40px;top:203.80px;width:0.45px;height:5.20px;background:#7d9cc2;"></div>
<span class="t" style="top:204px;font-size:4.6px;line-height:6.44px;color:#3868a6;left:448.85px;">操作日志</span>
<div style="left:331.20px;top:203.80px;width:0.45px;height:5.20px;background:#7d9cc2;"></div>
<div style="left:226.60px;top:210.00px;width:517.60px;height:187.60px;background:#e1e9f3;border:0.5px solid #c3d0e0;"></div>
<span class="t" style="top:218px;font-size:4.6px;line-height:6.44px;color:#4c7cb8;right:494.00px;">文档名称</span>
<span class="t" style="top:230px;font-size:4.6px;line-height:6.44px;color:#4c7cb8;right:494.00px;">文档编码</span>
<span class="t" style="top:242px;font-size:4.6px;line-height:6.44px;color:#4c7cb8;right:494.00px;">版本</span>
<span class="t" style="top:253px;font-size:4.6px;line-height:6.44px;color:#4c7cb8;right:494.00px;">创建时间</span>
<span class="t" style="top:265px;font-size:4.6px;line-height:6.44px;color:#4c7cb8;right:494.00px;">修改时间</span>
<span class="t" style="top:277px;font-size:4.6px;line-height:6.44px;color:#4c7cb8;right:494.00px;">归档时间</span>
<span class="t" style="top:288px;font-size:4.6px;line-height:6.44px;color:#4c7cb8;right:494.00px;">备注</span>
<span class="t" style="top:298px;font-size:4.6px;line-height:6.44px;color:#222;right:494.00px;">关联文档数量</span>
<span class="t" style="top:308px;font-size:4.6px;line-height:6.44px;color:#333;right:494.00px;">图号编码</span>
<div style="left:259.60px;top:217.50px;width:70.00px;height:7.00px;background:#e6edf5;border:0.5px solid #bcc8d7;"></div>
<div style="left:259.60px;top:228.80px;width:70.00px;height:7.00px;background:#e6edf5;border:0.5px solid #bcc8d7;"></div>
<div style="left:259.60px;top:240.60px;width:70.00px;height:7.00px;background:#e6edf5;border:0.5px solid #bcc8d7;"></div>
<div style="left:259.60px;top:252.50px;width:70.00px;height:7.00px;background:#e6edf5;border:0.5px solid #bcc8d7;"></div>
<div style="left:259.60px;top:264.30px;width:70.00px;height:7.00px;background:#e6edf5;border:0.5px solid #bcc8d7;"></div>
<div style="left:259.60px;top:276.10px;width:70.00px;height:7.00px;background:#e6edf5;border:0.5px solid #bcc8d7;"></div>
<div style="left:259.60px;top:296.80px;width:49.60px;height:6.80px;background:#e6edf5;border:0.5px solid #bcc8d7;"></div>
<div style="left:259.60px;top:306.80px;width:49.60px;height:6.80px;background:#e6edf5;border:0.5px solid #bcc8d7;"></div>
<span class="t" style="top:218px;font-size:4.6px;line-height:6.44px;color:#4c7cb8;right:414.00px;">文件类型</span>
<div style="left:338.60px;top:217.50px;width:50.60px;height:7.00px;background:#e6edf5;border:0.5px solid #bcc8d7;"></div>
<span class="s" style="top:218px;font-size:4.6px;line-height:6.44px;color:#111;left:340.20px;"><span style="font-family:'Liberation Mono',monospace;font-size:4.50px;letter-spacing:-0.34px">DWG</span>文档</span>
<span class="t" style="top:230px;font-size:4.6px;line-height:6.44px;color:#4c7cb8;right:414.00px;">文件大小</span>
<div style="left:338.60px;top:228.80px;width:50.60px;height:7.00px;background:#e6edf5;border:0.5px solid #bcc8d7;"></div>
<span class="s" style="top:230px;font-size:4.6px;line-height:6.44px;color:#111;left:340.20px;"><span style="font-family:'Liberation Mono',monospace;font-size:4.50px;letter-spacing:-0.34px">89 KB</span></span>
<span class="t" style="top:242px;font-size:4.6px;line-height:6.44px;color:#4c7cb8;right:414.00px;">版本</span>
<div style="left:338.60px;top:240.60px;width:50.60px;height:7.00px;background:#e6edf5;border:0.5px solid #bcc8d7;"></div>
<span class="s" style="top:242px;font-size:4.6px;line-height:6.44px;color:#111;left:340.20px;"><span style="font-family:'Liberation Mono',monospace;font-size:4.50px;letter-spacing:-0.34px">B.1</span></span>
<span class="t" style="top:253px;font-size:4.6px;line-height:6.44px;color:#4c7cb8;right:414.00px;">创建用户</span>
<div style="left:338.60px;top:252.50px;width:50.60px;height:7.00px;background:#e6edf5;border:0.5px solid #bcc8d7;"></div>
<span class="s" style="top:253px;font-size:4.6px;line-height:6.44px;color:#111;left:340.20px;">黎桂玲</span>
<span class="t" style="top:265px;font-size:4.6px;line-height:6.44px;color:#4c7cb8;right:414.00px;">修改用户</span>
<div style="left:338.60px;top:264.30px;width:50.60px;height:7.00px;background:#e6edf5;border:0.5px solid #bcc8d7;"></div>
<span class="s" style="top:266px;font-size:4.6px;line-height:6.44px;color:#111;left:340.20px;"><span style="font-family:'Liberation Mono',monospace;font-size:4.50px;letter-spacing:-0.34px">ruly</span></span>
<span class="t" style="top:277px;font-size:4.6px;line-height:6.44px;color:#4c7cb8;right:414.00px;">发布时间</span>
<div style="left:338.60px;top:276.10px;width:50.60px;height:7.00px;background:#e6edf5;border:0.5px solid #bcc8d7;"></div>
<div style="left:383.40px;top:218.00px;width:5.40px;height:6.00px;background:#e9eef4;border:0.5px solid #9aa8ba;border-radius:0.5px;"></div>
<span class="t" style="top:221px;font-size:3.4px;line-height:4.76px;color:#333;left:384.50px;">...</span>
<span class="t" style="top:218px;font-size:4.6px;line-height:6.44px;color:#222;left:393.60px;">备注:</span>
<div style="left:405.10px;top:217.40px;width:55.30px;height:65.40px;background:#e6edf5;border:0.5px solid #bcc8d7;"></div>
<div style="left:453.40px;top:217.90px;width:6.50px;height:64.40px;background:#c4d7ea;"></div>
<div style="left:453.90px;top:218.30px;width:5.60px;height:5.60px;background:#eef3f8;border:0.5px solid #b8c6d6;border-radius:0.6px;"></div>
<div style="left:453.90px;top:276.30px;width:5.60px;height:5.60px;background:#eef3f8;border:0.5px solid #b8c6d6;border-radius:0.6px;"></div>
<svg style="left:455.4px;top:220.0px;width:2.6px;height:2.2px" viewBox="0 0 26 22"><path d="M2 20L13 3l11 17z" fill="#4a5668"/></svg>
<svg style="left:455.4px;top:278.2px;width:2.6px;height:2.2px" viewBox="0 0 26 22"><path d="M2 2l11 17L24 2z" fill="#4a5668"/></svg>
<svg style="left:474.2px;top:217.0px;width:38.8px;height:38.8px" viewBox="0 0 45 45"><rect width="45" height="45" fill="#fff"/><path d="M0 0h2v1h-2zM3 0h1v1h-1zM5 0h8v1h-8zM14 0h2v1h-2zM19 0h1v1h-1zM21 0h1v1h-1zM23 0h4v1h-4zM28 0h1v1h-1zM31 0h1v1h-1zM33 0h3v1h-3zM37 0h2v1h-2zM40 0h2v1h-2zM44 0h1v1h-1zM4 1h1v1h-1zM6 1h2v1h-2zM9 1h3v1h-3zM16 1h1v1h-1zM20 1h1v1h-1zM23 1h1v1h-1zM25 1h1v1h-1zM30 1h2v1h-2zM33 1h5v1h-5zM39 1h3v1h-3zM43 1h2v1h-2zM4 2h3v1h-3zM9 2h5v1h-5zM15 2h4v1h-4zM22 2h1v1h-1zM25 2h1v1h-1zM30 2h3v1h-3zM34 2h11v1h-11zM2 3h5v1h-5zM9 3h6v1h-6zM16 3h2v1h-2zM20 3h1v1h-1zM22 3h1v1h-1zM27 3h3v1h-3zM33 3h2v1h-2zM41 3h4v1h-4zM0 4h3v1h-3zM5 4h1v1h-1zM9 4h5v1h-5zM17 4h1v1h-1zM20 4h1v1h-1zM25 4h2v1h-2zM28 4h1v1h-1zM31 4h2v1h-2zM35 4h3v1h-3zM40 4h1v1h-1zM44 4h1v1h-1zM1 5h2v1h-2zM7 5h1v1h-1zM10 5h4v1h-4zM15 5h3v1h-3zM19 5h2v1h-2zM23 5h1v1h-1zM25 5h1v1h-1zM28 5h4v1h-4zM33 5h2v1h-2zM37 5h2v1h-2zM41 5h1v1h-1zM43 5h2v1h-2zM1 6h1v1h-1zM5 6h1v1h-1zM7 6h2v1h-2zM10 6h1v1h-1zM12 6h1v1h-1zM17 6h1v1h-1zM21 6h6v1h-6zM30 6h1v1h-1zM33 6h1v1h-1zM36 6h1v1h-1zM38 6h2v1h-2zM42 6h3v1h-3zM0 7h3v1h-3zM4 7h1v1h-1zM6 7h3v1h-3zM10 7h2v1h-2zM15 7h3v1h-3zM19 7h3v1h-3zM24 7h2v1h-2zM29 7h2v1h-2zM32 7h2v1h-2zM37 7h1v1h-1zM39 7h1v1h-1zM41 7h2v1h-2zM0 8h2v1h-2zM3 8h7v1h-7zM11 8h7v1h-7zM20 8h2v1h-2zM23 8h1v1h-1zM25 8h2v1h-2zM28 8h2v1h-2zM32 8h1v1h-1zM36 8h5v1h-5zM42 8h3v1h-3zM3 9h7v1h-7zM13 9h1v1h-1zM15 9h16v1h-16zM37 9h2v1h-2zM40 9h1v1h-1zM43 9h1v1h-1zM4 10h1v1h-1zM6 10h1v1h-1zM14 10h5v1h-5zM24 10h2v1h-2zM28 10h1v1h-1zM31 10h1v1h-1zM33 10h3v1h-3zM37 10h1v1h-1zM40 10h3v1h-3zM2 11h3v1h-3zM6 11h1v1h-1zM8 11h3v1h-3zM14 11h5v1h-5zM20 11h1v1h-1zM23 11h2v1h-2zM27 11h3v1h-3zM31 11h1v1h-1zM33 11h1v1h-1zM36 11h1v1h-1zM38 11h1v1h-1zM41 11h1v1h-1zM43 11h2v1h-2zM0 12h7v1h-7zM8 12h1v1h-1zM11 12h1v1h-1zM15 12h3v1h-3zM20 12h5v1h-5zM26 12h1v1h-1zM28 12h5v1h-5zM41 12h1v1h-1zM43 12h1v1h-1zM1 13h2v1h-2zM4 13h4v1h-4zM10 13h1v1h-1zM12 13h1v1h-1zM14 13h4v1h-4zM19 13h2v1h-2zM23 13h8v1h-8zM34 13h2v1h-2zM37 13h4v1h-4zM42 13h2v1h-2zM1 14h5v1h-5zM9 14h2v1h-2zM13 14h1v1h-1zM15 14h2v1h-2zM21 14h3v1h-3zM30 14h1v1h-1zM32 14h1v1h-1zM34 14h1v1h-1zM37 14h3v1h-3zM42 14h2v1h-2zM1 15h2v1h-2zM4 15h3v1h-3zM10 15h3v1h-3zM15 15h3v1h-3zM19 15h2v1h-2zM23 15h4v1h-4zM28 15h1v1h-1zM31 15h2v1h-2zM34 15h1v1h-1zM36 15h2v1h-2zM39 15h1v1h-1zM41 15h4v1h-4zM2 16h3v1h-3zM6 16h4v1h-4zM15 16h2v1h-2zM19 16h1v1h-1zM21 16h7v1h-7zM29 16h1v1h-1zM31 16h2v1h-2zM35 16h4v1h-4zM40 16h2v1h-2zM43 16h2v1h-2zM2 17h3v1h-3zM6 17h1v1h-1zM9 17h2v1h-2zM13 17h1v1h-1zM15 17h3v1h-3zM22 17h3v1h-3zM27 17h4v1h-4zM32 17h1v1h-1zM38 17h3v1h-3zM42 17h2v1h-2zM0 18h3v1h-3zM4 18h1v1h-1zM8 18h4v1h-4zM13 18h3v1h-3zM21 18h1v1h-1zM23 18h1v1h-1zM25 18h1v1h-1zM27 18h4v1h-4zM33 18h2v1h-2zM36 18h2v1h-2zM41 18h2v1h-2zM1 19h4v1h-4zM8 19h1v1h-1zM10 19h2v1h-2zM14 19h1v1h-1zM17 19h5v1h-5zM24 19h3v1h-3zM28 19h3v1h-3zM33 19h3v1h-3zM38 19h2v1h-2zM41 19h3v1h-3zM0 20h1v1h-1zM2 20h2v1h-2zM6 20h2v1h-2zM9 20h2v1h-2zM12 20h1v1h-1zM14 20h1v1h-1zM16 20h3v1h-3zM22 20h1v1h-1zM24 20h4v1h-4zM30 20h2v1h-2zM34 20h2v1h-2zM38 20h2v1h-2zM41 20h1v1h-1zM0 21h1v1h-1zM2 21h2v1h-2zM6 21h7v1h-7zM15 21h1v1h-1zM18 21h1v1h-1zM20 21h1v1h-1zM24 21h2v1h-2zM27 21h1v1h-1zM29 21h3v1h-3zM33 21h2v1h-2zM37 21h8v1h-8zM0 22h2v1h-2zM3 22h1v1h-1zM6 22h4v1h-4zM11 22h1v1h-1zM16 22h1v1h-1zM18 22h1v1h-1zM21 22h1v1h-1zM24 22h2v1h-2zM27 22h1v1h-1zM29 22h1v1h-1zM31 22h2v1h-2zM34 22h7v1h-7zM44 22h1v1h-1zM1 23h1v1h-1zM4 23h1v1h-1zM9 23h1v1h-1zM12 23h1v1h-1zM14 23h1v1h-1zM17 23h1v1h-1zM19 23h2v1h-2zM22 23h1v1h-1zM24 23h1v1h-1zM29 23h4v1h-4zM34 23h2v1h-2zM37 23h2v1h-2zM40 23h5v1h-5zM0 24h1v1h-1zM3 24h1v1h-1zM5 24h2v1h-2zM8 24h3v1h-3zM14 24h3v1h-3zM19 24h1v1h-1zM21 24h1v1h-1zM24 24h1v1h-1zM26 24h1v1h-1zM28 24h3v1h-3zM32 24h1v1h-1zM35 24h2v1h-2zM38 24h1v1h-1zM41 24h4v1h-4zM3 25h1v1h-1zM6 25h1v1h-1zM8 25h6v1h-6zM18 25h1v1h-1zM20 25h1v1h-1zM23 25h1v1h-1zM26 25h1v1h-1zM28 25h3v1h-3zM34 25h1v1h-1zM36 25h2v1h-2zM43 25h1v1h-1zM2 26h1v1h-1zM5 26h2v1h-2zM8 26h1v1h-1zM10 26h3v1h-3zM14 26h4v1h-4zM22 26h1v1h-1zM24 26h1v1h-1zM28 26h1v1h-1zM32 26h4v1h-4zM41 26h3v1h-3zM0 27h6v1h-6zM7 27h2v1h-2zM10 27h1v1h-1zM13 27h3v1h-3zM17 27h1v1h-1zM20 27h1v1h-1zM22 27h1v1h-1zM24 27h3v1h-3zM29 27h3v1h-3zM33 27h3v1h-3zM37 27h1v1h-1zM39 27h2v1h-2zM42 27h2v1h-2zM0 28h1v1h-1zM5 28h3v1h-3zM9 28h1v1h-1zM11 28h3v1h-3zM15 28h2v1h-2zM18 28h2v1h-2zM24 28h3v1h-3zM30 28h2v1h-2zM34 28h2v1h-2zM37 28h3v1h-3zM42 28h3v1h-3zM0 29h1v1h-1zM2 29h3v1h-3zM7 29h1v1h-1zM9 29h2v1h-2zM14 29h2v1h-2zM17 29h5v1h-5zM24 29h1v1h-1zM26 29h2v1h-2zM29 29h1v1h-1zM32 29h1v1h-1zM35 29h2v1h-2zM44 29h1v1h-1zM0 30h1v1h-1zM2 30h2v1h-2zM7 30h3v1h-3zM11 30h1v1h-1zM14 30h1v1h-1zM17 30h2v1h-2zM20 30h1v1h-1zM22 30h1v1h-1zM25 30h2v1h-2zM30 30h1v1h-1zM34 30h1v1h-1zM36 30h1v1h-1zM38 30h1v1h-1zM40 30h1v1h-1zM42 30h3v1h-3zM0 31h4v1h-4zM5 31h3v1h-3zM11 31h1v1h-1zM13 31h3v1h-3zM19 31h1v1h-1zM21 31h1v1h-1zM23 31h1v1h-1zM27 31h2v1h-2zM30 31h1v1h-1zM32 31h1v1h-1zM34 31h6v1h-6zM41 31h4v1h-4zM0 32h1v1h-1zM3 32h1v1h-1zM6 32h1v1h-1zM10 32h1v1h-1zM13 32h2v1h-2zM17 32h4v1h-4zM22 32h2v1h-2zM26 32h1v1h-1zM34 32h1v1h-1zM38 32h1v1h-1zM41 32h4v1h-4zM0 33h5v1h-5zM7 33h1v1h-1zM9 33h1v1h-1zM13 33h2v1h-2zM16 33h1v1h-1zM19 33h1v1h-1zM23 33h1v1h-1zM25 33h2v1h-2zM28 33h1v1h-1zM31 33h1v1h-1zM33 33h2v1h-2zM37 33h3v1h-3zM42 33h1v1h-1zM44 33h1v1h-1zM0 34h3v1h-3zM6 34h3v1h-3zM12 34h1v1h-1zM16 34h4v1h-4zM31 34h1v1h-1zM33 34h1v1h-1zM35 34h3v1h-3zM41 34h1v1h-1zM0 35h5v1h-5zM7 35h1v1h-1zM9 35h2v1h-2zM14 35h3v1h-3zM20 35h3v1h-3zM24 35h4v1h-4zM29 35h1v1h-1zM31 35h1v1h-1zM33 35h2v1h-2zM36 35h1v1h-1zM38 35h2v1h-2zM44 35h1v1h-1zM2 36h1v1h-1zM4 36h1v1h-1zM7 36h2v1h-2zM11 36h2v1h-2zM14 36h1v1h-1zM16 36h3v1h-3zM20 36h1v1h-1zM22 36h1v1h-1zM24 36h1v1h-1zM27 36h2v1h-2zM33 36h2v1h-2zM38 36h1v1h-1zM43 36h2v1h-2zM1 37h1v1h-1zM6 37h4v1h-4zM13 37h1v1h-1zM18 37h1v1h-1zM23 37h2v1h-2zM27 37h1v1h-1zM30 37h1v1h-1zM33 37h3v1h-3zM38 37h2v1h-2zM42 37h1v1h-1zM2 38h1v1h-1zM4 38h3v1h-3zM8 38h1v1h-1zM10 38h4v1h-4zM15 38h2v1h-2zM19 38h1v1h-1zM21 38h4v1h-4zM27 38h1v1h-1zM29 38h1v1h-1zM31 38h1v1h-1zM36 38h6v1h-6zM44 38h1v1h-1zM2 39h1v1h-1zM4 39h2v1h-2zM7 39h1v1h-1zM12 39h3v1h-3zM17 39h4v1h-4zM24 39h1v1h-1zM29 39h2v1h-2zM34 39h1v1h-1zM37 39h8v1h-8zM1 40h1v1h-1zM3 40h2v1h-2zM6 40h1v1h-1zM10 40h3v1h-3zM16 40h2v1h-2zM19 40h1v1h-1zM21 40h3v1h-3zM26 40h1v1h-1zM28 40h4v1h-4zM33 40h4v1h-4zM38 40h1v1h-1zM40 40h1v1h-1zM43 40h2v1h-2zM0 41h4v1h-4zM7 41h2v1h-2zM10 41h1v1h-1zM12 41h1v1h-1zM14 41h1v1h-1zM16 41h3v1h-3zM21 41h2v1h-2zM24 41h1v1h-1zM26 41h2v1h-2zM30 41h3v1h-3zM34 41h3v1h-3zM41 41h2v1h-2zM44 41h1v1h-1zM1 42h1v1h-1zM3 42h1v1h-1zM6 42h2v1h-2zM9 42h1v1h-1zM11 42h2v1h-2zM14 42h3v1h-3zM18 42h5v1h-5zM26 42h1v1h-1zM28 42h1v1h-1zM30 42h1v1h-1zM33 42h2v1h-2zM37 42h1v1h-1zM39 42h4v1h-4zM44 42h1v1h-1zM0 43h1v1h-1zM2 43h2v1h-2zM8 43h1v1h-1zM11 43h8v1h-8zM21 43h1v1h-1zM24 43h1v1h-1zM27 43h2v1h-2zM31 43h1v1h-1zM34 43h4v1h-4zM43 43h2v1h-2zM2 44h2v1h-2zM5 44h1v1h-1zM7 44h5v1h-5zM19 44h1v1h-1zM21 44h1v1h-1zM23 44h1v1h-1zM27 44h1v1h-1zM29 44h1v1h-1zM31 44h2v1h-2zM34 44h1v1h-1zM37 44h3v1h-3zM41 44h4v1h-4z" fill="#111"/></svg>
<div style="left:125.00px;top:400.40px;width:625.00px;height:10.20px;background:#e4ecf5;border-top:0.5px solid #ccd7e4;"></div>
<span class="t" style="top:404px;font-size:4.6px;line-height:6.44px;color:#111;left:127.20px;">变更</span>
<span class="t" style="top:404px;font-size:4.6px;line-height:6.44px;color:#111;left:480.20px;">0 个对象</span>
<span class="t" style="top:404px;font-size:4.62px;line-height:6.47px;color:#111;left:520.70px;">南宁市二零二五科技有限公司彩虹EDM-企业图纸管理软件平台</span>
<span class="t" style="top:404px;font-size:4.6px;line-height:6.44px;color:#111;left:654.60px;">当前用户:技术主管</span>
<span class="t" style="top:404px;font-size:4.6px;line-height:6.44px;color:#111;left:696.00px;">当前岗位:文件岗位</span>
<div style="left:0.00px;top:410.40px;width:750.00px;height:11.60px;background:#20252b;"></div>
<svg style="left:4.0px;top:412.9px;width:6.0px;height:6.4px" viewBox="0 0 60 65"><path d="M0 9l26-4v25H0zM31 4l29-4v30H31zM0 35h26v25L0 56zM31 35h29v30l-29-4z" fill="#fff"/></svg>
<svg style="left:18.2px;top:412.8px;width:6.4px;height:6.4px" viewBox="0 0 64 64"><circle cx="32" cy="32" r="30" fill="#3f97ee"/><path d="M24 16v32M44 16L26 32l18 16" stroke="#fff" stroke-width="8" fill="none"/></svg>
<span class="t" style="top:414px;font-size:4.7px;line-height:6.58px;color:#fff;left:26.10px;">黄昏雨 - 酷狗音乐 暮...</span>
<svg style="left:82.0px;top:412.8px;width:6.4px;height:6.4px" viewBox="0 0 64 64"><circle cx="32" cy="32" r="29" fill="#8bc43f"/><circle cx="32" cy="32" r="14" fill="#cfe89d"/></svg>
<svg style="left:95.6px;top:412.8px;width:6.4px;height:6.4px" viewBox="0 0 64 64"><path d="M2 12h24l6 8h30v36H2z" fill="#f5c542"/><path d="M2 24h60" stroke="#fbe08a" stroke-width="6"/></svg>
<span class="t" style="top:414px;font-size:4.7px;line-height:6.58px;color:#fff;left:102.90px;">软件功能截图</span>
<svg style="left:158.8px;top:412.8px;width:6.4px;height:6.4px" viewBox="0 0 64 64"><ellipse cx="24" cy="26" rx="22" ry="19" fill="#3dc45c"/><ellipse cx="44" cy="40" rx="18" ry="15" fill="#d8f3de"/></svg>
<span class="t" style="top:414px;font-size:4.7px;line-height:6.58px;color:#fff;left:166.60px;">微信</span>
<svg style="left:221.20000000000002px;top:412.8px;width:6.4px;height:6.4px" viewBox="0 0 64 64"><circle cx="32" cy="32" r="29" fill="#f1f3ee"/><circle cx="32" cy="32" r="15" fill="#7fb36b"/></svg>
<span class="t" style="top:414px;font-size:4.7px;line-height:6.58px;color:#fff;left:229.50px;">西山居业集团(&quot;门&quot;~...</span>
<svg style="left:284.40000000000003px;top:412.8px;width:6.4px;height:6.4px" viewBox="0 0 64 64"><rect x="2" y="2" width="60" height="60" rx="6" fill="#14304f"/><path d="M18 46V18h10q8 0 8 8t-8 8h-10M44 30q-6 2-2 8t-4 10" stroke="#6fc3f4" stroke-width="6" fill="none"/></svg>
<span class="t" style="top:414px;font-size:4.7px;line-height:6.58px;color:#fff;left:293.00px;">变更申请.png @ 66...</span>
<div style="left:343.90px;top:410.40px;width:61.60px;height:11.60px;background:#47525f;"></div>
<svg style="left:347.1px;top:412.8px;width:6.4px;height:6.4px" viewBox="0 0 64 64"><rect x="2" y="4" width="60" height="56" rx="6" fill="#3b78d8"/><path d="M12 46L28 22l10 14 14-18" stroke="#dfeafc" stroke-width="8" fill="none"/></svg>
<span class="t" style="top:414px;font-size:4.7px;line-height:6.58px;color:#fff;left:355.20px;">彩虹EDM-企业图纸...</span>
<svg style="left:410.2px;top:412.8px;width:6.4px;height:6.4px" viewBox="0 0 64 64"><path d="M2 56L24 16l14 22 8-10 16 28z" fill="#6a5be0"/><circle cx="46" cy="14" r="6" fill="#8f84ee"/></svg>
<span class="t" style="top:414px;font-size:4.7px;line-height:6.58px;color:#fff;left:418.00px;">变更.png - WPS图片</span>
<svg style="left:472.8px;top:412.8px;width:6.4px;height:6.4px" viewBox="0 0 64 64"><rect x="2" y="2" width="60" height="60" rx="6" fill="#2a0a4a" stroke="#d291ff" stroke-width="4"/><path d="M18 46V18h8q8 0 8 8t-8 8h-8M42 46V30m0 4q4-5 10-4" stroke="#e0a8ff" stroke-width="6" fill="none"/></svg>
<span class="t" style="top:414px;font-size:4.7px;line-height:6.58px;color:#fff;left:481.40px;">Adobe Premiere Pr...</span>
<div style="left:15.60px;top:421.10px;width:60.20px;height:0.90px;background:#8db7ea;"></div>
<div style="left:80.40px;top:421.10px;width:9.20px;height:0.90px;background:#8db7ea;"></div>
<div style="left:93.00px;top:421.10px;width:61.20px;height:0.90px;background:#8db7ea;"></div>
<div style="left:156.00px;top:421.10px;width:61.60px;height:0.90px;background:#8db7ea;"></div>
<div style="left:218.80px;top:421.10px;width:61.80px;height:0.90px;background:#8db7ea;"></div>
<div style="left:282.00px;top:421.10px;width:61.60px;height:0.90px;background:#8db7ea;"></div>
<div style="left:344.30px;top:421.10px;width:60.80px;height:0.90px;background:#8db7ea;"></div>
<div style="left:408.00px;top:421.10px;width:61.60px;height:0.90px;background:#8db7ea;"></div>
<div style="left:470.80px;top:421.10px;width:61.80px;height:0.90px;background:#8db7ea;"></div>
<svg style="left:589.4px;top:412.8px;width:6.0px;height:6.0px" viewBox="0 0 64 64"><path d="M6 18q26-14 52 4v28q-26 12-52-6z" fill="#4f7a1c"/><circle cx="30" cy="32" r="10" fill="#20252b"/></svg>
<svg style="left:598.8px;top:412.8px;width:6.0px;height:6.0px" viewBox="0 0 64 64"><rect x="4" y="4" width="56" height="56" rx="10" fill="#f4f5f6"/><path d="M16 44q16-26 32 0" stroke="#555" stroke-width="6" fill="none"/></svg>
<svg style="left:608.4px;top:412.8px;width:6.0px;height:6.0px" viewBox="0 0 64 64"><circle cx="32" cy="32" r="26" fill="#e8746a"/><circle cx="32" cy="32" r="11" fill="#fbe4e0"/></svg>
<svg style="left:617.3px;top:412.8px;width:6.0px;height:6.0px" viewBox="0 0 64 64"><rect x="22" y="4" width="20" height="38" rx="10" fill="#f2f4f6"/><path d="M12 34q0 18 20 18t20-18M32 52v10" stroke="#dfe3e7" stroke-width="6" fill="none"/></svg>
<svg style="left:626.7px;top:412.8px;width:6.0px;height:6.0px" viewBox="0 0 64 64"><rect x="4" y="4" width="56" height="56" rx="10" fill="#2e8ff0"/><circle cx="32" cy="32" r="12" fill="#d6eaff"/></svg>
<svg style="left:636.0px;top:412.8px;width:6.0px;height:6.0px" viewBox="0 0 64 64"><circle cx="32" cy="18" r="12" fill="#f7d9c8"/><path d="M10 62q0-30 22-30t22 30z" fill="#e5482f"/></svg>
<svg style="left:645.7px;top:412.8px;width:6.0px;height:6.0px" viewBox="0 0 64 64"><ellipse cx="24" cy="26" rx="22" ry="19" fill="#3dc45c"/><ellipse cx="44" cy="40" rx="18" ry="15" fill="#bdecc7"/></svg>
<svg style="left:654.5px;top:412.8px;width:6.0px;height:6.0px" viewBox="0 0 64 64"><path d="M6 52L56 8 44 58 32 38z" fill="#f08a3c"/></svg>
<svg style="left:664.7px;top:412.8px;width:6.0px;height:6.0px" viewBox="0 0 64 64"><rect x="10" y="10" width="48" height="34" fill="none" stroke="#e4e7ea" stroke-width="6"/><path d="M4 24v34h20" stroke="#e4e7ea" stroke-width="6" fill="none"/></svg>
<svg style="left:673.5px;top:412.8px;width:6.0px;height:6.0px" viewBox="0 0 64 64"><rect x="4" y="4" width="56" height="56" rx="10" fill="#0c0c0c"/><path d="M36 14v26a9 9 0 1 1-9-9M36 16q4 10 14 10" stroke="#fff" stroke-width="7" fill="none"/></svg>
<svg style="left:682.4px;top:412.8px;width:6.0px;height:6.0px" viewBox="0 0 64 64"><path d="M6 24h12l16-14v44L18 40H6z" fill="#d9dde1"/><path d="M42 22q8 10 0 20" stroke="#d9dde1" stroke-width="5" fill="none"/></svg>
<span class="t" style="top:413px;font-size:4.5px;line-height:6.30px;color:#fff;left:694.30px;">简体</span>
<span class="t" style="top:413px;font-size:4.5px;line-height:6.30px;color:#fff;left:709.50px;">9:33:58</span>
<svg style="left:733.0px;top:412.5px;width:7.4px;height:6.8px" viewBox="0 0 74 68"><path d="M4 4h66v46H40L28 64V50H4z" fill="#f6f7f8"/><path d="M18 20h38M18 32h38" stroke="#20252b" stroke-width="5"/></svg>
<div style="left:249.80px;top:60.40px;width:81.40px;height:236.80px;background:rgba(0,0,0,0.10);filter:blur(1.2px);"></div>
<div style="left:388.00px;top:60.20px;width:1.40px;height:142.40px;background:rgba(0,0,0,0.10);filter:blur(1px);"></div>
<div style="left:330.00px;top:201.40px;width:58.60px;height:1.60px;background:rgba(0,0,0,0.10);filter:blur(1px);"></div>
<div style="left:249.00px;top:59.30px;width:80.80px;height:236.10px;background:#f1f2f3;border:0.5px solid #c2c5ca;"></div>
<div style="left:249.60px;top:60.80px;width:79.60px;height:8.40px;background:#91c9f7;"></div>
<span class="t" style="top:62px;font-size:4.7px;line-height:6.58px;color:#000;left:261.80px;">生命周期(L)</span>
<span class="t" style="top:62px;font-size:5px;line-height:7.00px;color:#333;left:323.80px;">›</span>
<span class="t" style="top:74px;font-size:4.7px;line-height:6.58px;color:#000;left:261.80px;">浏览(V)</span>
<span class="t" style="top:82px;font-size:4.7px;line-height:6.58px;color:#000;left:261.80px;">打开(O)</span>
<span class="t" style="top:91px;font-size:4.7px;line-height:6.58px;color:#000;left:261.80px;">文档比较</span>
<span class="t" style="top:102px;font-size:4.7px;line-height:6.58px;color:#000;left:261.80px;">创建工作流(W)</span>
<span class="t" style="top:111px;font-size:4.7px;line-height:6.58px;color:#000;left:261.80px;">发送</span>
<span class="t" style="top:110px;font-size:5px;line-height:7.00px;color:#333;left:323.80px;">›</span>
<span class="t" style="top:122px;font-size:4.7px;line-height:6.58px;color:#000;left:261.80px;">打印(P)</span>
<span class="t" style="top:121px;font-size:5px;line-height:7.00px;color:#333;left:323.80px;">›</span>
<span class="t" style="top:130px;font-size:4.7px;line-height:6.58px;color:#000;left:261.80px;">导出(X)</span>
<span class="t" style="top:130px;font-size:5px;line-height:7.00px;color:#333;left:323.80px;">›</span>
<span class="t" style="top:142px;font-size:4.7px;line-height:6.58px;color:#000;left:261.80px;">自定义菜单</span>
<span class="t" style="top:153px;font-size:4.7px;line-height:6.58px;color:#000;left:261.80px;">批量操作</span>
<span class="t" style="top:152px;font-size:5px;line-height:7.00px;color:#333;left:323.80px;">›</span>
<span class="t" style="top:165px;font-size:4.7px;line-height:6.58px;color:#000;left:261.80px;">剪切(T)</span>
<span class="t" style="top:165px;font-size:4.7px;line-height:6.58px;color:#000;right:427.80px;">Ctrl+X</span>
<span class="t" style="top:173px;font-size:4.7px;line-height:6.58px;color:#000;left:261.80px;">复制(C)</span>
<span class="t" style="top:173px;font-size:4.7px;line-height:6.58px;color:#000;right:427.80px;">Ctrl+C</span>
<span class="t" style="top:182px;font-size:4.7px;line-height:6.58px;color:#000;left:261.80px;">借用(B)</span>
<span class="t" style="top:182px;font-size:4.7px;line-height:6.58px;color:#000;right:427.80px;">Ctrl+B</span>
<span class="t" style="top:193px;font-size:4.7px;line-height:6.58px;color:#000;left:261.80px;">刷新(E)</span>
<span class="t" style="top:193px;font-size:4.7px;line-height:6.58px;color:#000;right:427.80px;">F5</span>
<span class="t" style="top:204px;font-size:4.7px;line-height:6.58px;color:#000;left:261.80px;">收藏(Q)</span>
<span class="t" style="top:204px;font-size:4.7px;line-height:6.58px;color:#000;right:427.80px;">F4</span>
<span class="t" style="top:216px;font-size:4.7px;line-height:6.58px;color:#000;left:261.80px;">转到工作区</span>
<span class="t" style="top:216px;font-size:4.7px;line-height:6.58px;color:#000;right:427.80px;">Ctrl+Q</span>
<span class="t" style="top:224px;font-size:4.7px;line-height:6.58px;color:#000;left:261.80px;">转到发布区</span>
<span class="t" style="top:224px;font-size:4.7px;line-height:6.58px;color:#000;right:427.80px;">Ctrl+E</span>
<span class="t" style="top:236px;font-size:4.7px;line-height:6.58px;color:#000;left:261.80px;">被引用情况</span>
<span class="t" style="top:247px;font-size:4.7px;line-height:6.58px;color:#000;left:261.80px;">权限(A)</span>
<span class="t" style="top:255px;font-size:4.7px;line-height:6.58px;color:#000;left:261.80px;">权限申请(G)</span>
<span class="t" style="top:267px;font-size:4.7px;line-height:6.58px;color:#8b8f95;left:261.80px;">删除(D)</span>
<span class="t" style="top:267px;font-size:4.7px;line-height:6.58px;color:#8b8f95;right:427.80px;">Del</span>
<span class="t" style="top:278px;font-size:4.7px;line-height:6.58px;color:#000;left:261.80px;">属性(R)</span>
<span class="t" style="top:287px;font-size:4.7px;line-height:6.58px;color:#8b8f95;left:261.80px;">批量编辑属性</span>
<div style="left:260.40px;top:70.80px;width:68.60px;height:0.45px;background:#e8e9eb;"></div>
<div style="left:260.40px;top:99.10px;width:68.60px;height:0.45px;background:#e8e9eb;"></div>
<div style="left:260.40px;top:118.90px;width:68.60px;height:0.45px;background:#e8e9eb;"></div>
<div style="left:260.40px;top:138.70px;width:68.60px;height:0.45px;background:#e8e9eb;"></div>
<div style="left:260.40px;top:150.10px;width:68.60px;height:0.45px;background:#e8e9eb;"></div>
<div style="left:260.40px;top:161.60px;width:68.60px;height:0.45px;background:#e8e9eb;"></div>
<div style="left:260.40px;top:190.00px;width:68.60px;height:0.45px;background:#e8e9eb;"></div>
<div style="left:260.40px;top:201.30px;width:68.60px;height:0.45px;background:#e8e9eb;"></div>
<div style="left:260.40px;top:212.80px;width:68.60px;height:0.45px;background:#e8e9eb;"></div>
<div style="left:260.40px;top:232.70px;width:68.60px;height:0.45px;background:#e8e9eb;"></div>
<div style="left:260.40px;top:244.00px;width:68.60px;height:0.45px;background:#e8e9eb;"></div>
<div style="left:260.40px;top:263.90px;width:68.60px;height:0.45px;background:#e8e9eb;"></div>
<div style="left:260.40px;top:275.40px;width:68.60px;height:0.45px;background:#e8e9eb;"></div>
<div style="left:329.20px;top:59.30px;width:59.00px;height:142.70px;background:#f1f2f3;border:0.5px solid #c2c5ca;"></div>
<div style="left:329.80px;top:169.20px;width:57.60px;height:8.50px;background:#88c1f5;"></div>
<span class="t" style="top:62px;font-size:4.7px;line-height:6.58px;color:#9a9ea4;left:342.00px;">检出(O)</span>
<span class="t" style="top:74px;font-size:4.7px;line-height:6.58px;color:#9a9ea4;left:342.00px;">继续编辑(A)</span>
<span class="t" style="top:82px;font-size:4.7px;line-height:6.58px;color:#9a9ea4;left:342.00px;">检入(I)</span>
<span class="t" style="top:94px;font-size:4.7px;line-height:6.58px;color:#9a9ea4;left:342.00px;">取消检出(U)</span>
<span class="t" style="top:105px;font-size:4.7px;line-height:6.58px;color:#9a9ea4;left:342.00px;">归档(A)</span>
<span class="t" style="top:113px;font-size:4.7px;line-height:6.58px;color:#000;left:342.00px;">取消归档(C)</span>
<span class="t" style="top:122px;font-size:4.7px;line-height:6.58px;color:#000;left:342.00px;">发布</span>
<span class="t" style="top:130px;font-size:4.7px;line-height:6.58px;color:#9a9ea4;left:342.00px;">再次发布</span>
<span class="t" style="top:139px;font-size:4.7px;line-height:6.58px;color:#9a9ea4;left:342.00px;">回收</span>
<span class="t" style="top:151px;font-size:4.7px;line-height:6.58px;color:#000;left:342.00px;">废止(D)</span>
<span class="t" style="top:159px;font-size:4.7px;line-height:6.58px;color:#9a9ea4;left:342.00px;">复苏</span>
<span class="t" style="top:171px;font-size:4.7px;line-height:6.58px;color:#000;left:342.00px;">变更(V)</span>
<span class="t" style="top:182px;font-size:4.7px;line-height:6.58px;color:#9a9ea4;left:342.00px;">替换</span>
<span class="t" style="top:193px;font-size:4.7px;line-height:6.58px;color:#9a9ea4;left:342.00px;">三维重命名</span>
<div style="left:340.60px;top:70.80px;width:46.60px;height:0.45px;background:#e8e9eb;"></div>
<div style="left:340.60px;top:90.60px;width:46.60px;height:0.45px;background:#e8e9eb;"></div>
<div style="left:340.60px;top:101.90px;width:46.60px;height:0.45px;background:#e8e9eb;"></div>
<div style="left:340.60px;top:147.70px;width:46.60px;height:0.45px;background:#e8e9eb;"></div>
<div style="left:340.60px;top:167.40px;width:46.60px;height:0.45px;background:#e8e9eb;"></div>
<div style="left:340.60px;top:178.90px;width:46.60px;height:0.45px;background:#e8e9eb;"></div>
<div style="left:340.60px;top:190.00px;width:46.60px;height:0.45px;background:#e8e9eb;"></div>
<svg style="left:360.4px;top:165.4px;width:14px;height:14px" viewBox="0 0 140 140"><circle cx="70" cy="70" r="68" fill="rgb(240,125,70)" opacity="0.42"/></svg>
<svg style="left:366.5px;top:171.2px;width:8.6px;height:11.8px" viewBox="0 0 8 11"><path d="M0.6 0.4 L0.6 8.6 L2.5 6.9 L4.0 10.2 L5.3 9.6 L3.9 6.4 L6.4 6.2 Z" fill="#fff" stroke="#222" stroke-width="0.55" stroke-linejoin="round"/></svg>
</div></body></html>
